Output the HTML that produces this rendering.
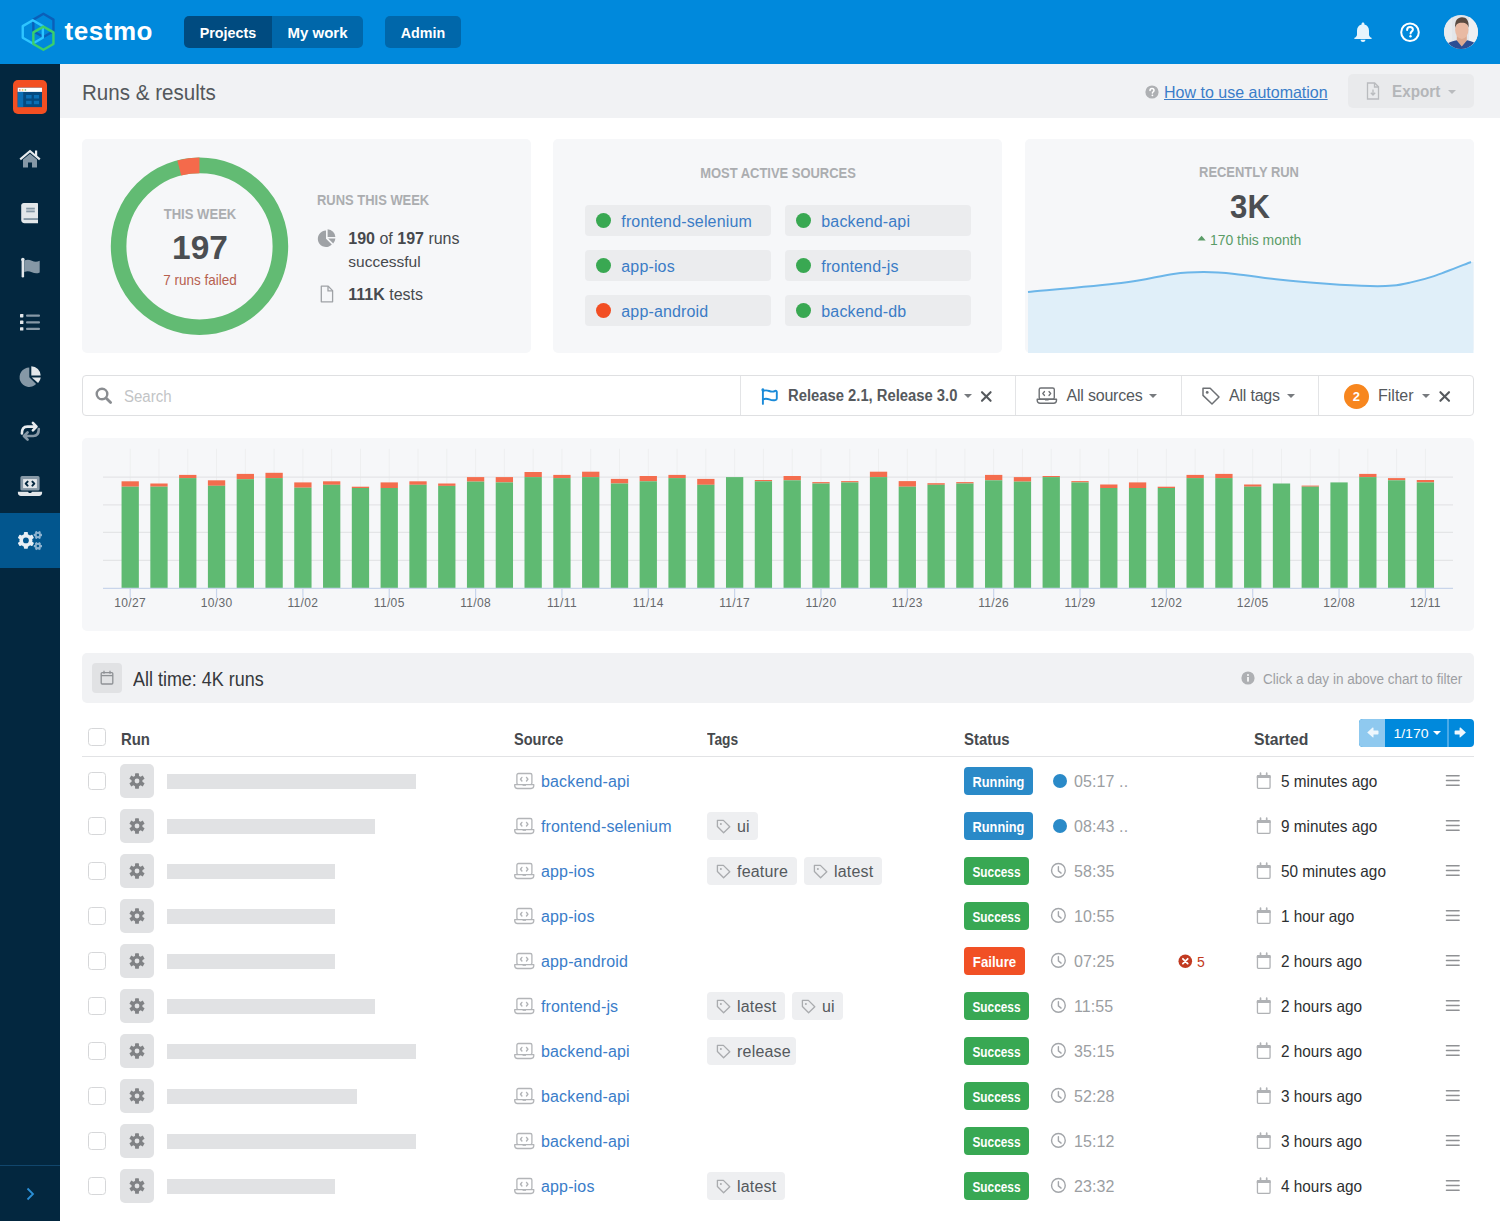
<!DOCTYPE html>
<html><head><meta charset="utf-8"><title>Runs &amp; results</title>
<style>
html,body{margin:0;padding:0;width:1500px;height:1221px;overflow:hidden;background:#fff;font-family:"Liberation Sans",sans-serif;}
.t{position:absolute;white-space:nowrap;}
.r{position:absolute;}
svg.r{overflow:visible}
</style></head><body>

<div class="r" style="left:0px;top:0px;width:1500px;height:64px;background:#0089dc;border-radius:0px;"></div>
<svg class="r" style="left:0px;top:0px;" width="64" height="64" viewBox="0 0 64 64"><polygon points="43.40,13.80 53.45,19.60 53.45,31.20 43.40,37.00 33.35,31.20 33.35,19.60" fill="none" stroke="#0b5fb8" stroke-width="2.4" stroke-linejoin="round"/><polygon points="32.80,20.30 42.85,26.10 42.85,37.70 32.80,43.50 22.75,37.70 22.75,26.10" fill="none" stroke="#2ec5ff" stroke-width="2.4" stroke-linejoin="round"/><polygon points="43.40,26.60 53.45,32.40 53.45,44.00 43.40,49.80 33.35,44.00 33.35,32.40" fill="none" stroke="#3bcf6a" stroke-width="2.4" stroke-linejoin="round"/></svg>
<div class="t" style="left:64.50px;top:14.94px;font-size:26px;line-height:33.8px;color:#fff;font-weight:bold;letter-spacing:0.55px">testmo</div>
<div class="r" style="left:184px;top:16px;width:88px;height:32px;background:#004b80;border-radius:0px;border-radius:5px 0 0 5px"></div>
<div class="r" style="left:272px;top:16px;width:91px;height:32px;background:#0067aa;border-radius:0px;border-radius:0 5px 5px 0"></div>
<div class="r" style="left:385px;top:16px;width:76px;height:32px;background:#0067aa;border-radius:5px;"></div>
<div class="t" style="left:183.50px;top:23.30px;width:88px;text-align:center;font-size:15.5px;line-height:20.15px;color:#fff;font-weight:bold;transform:scaleX(0.9236);transform-origin:50% 0;">Projects</div>
<div class="t" style="left:271.80px;top:23.30px;width:91px;text-align:center;font-size:15.5px;line-height:20.15px;color:#fff;font-weight:bold;transform:scaleX(0.9675);transform-origin:50% 0;">My work</div>
<div class="t" style="left:385.00px;top:23.30px;width:76px;text-align:center;font-size:15.5px;line-height:20.15px;color:#fff;font-weight:bold;transform:scaleX(0.9215);transform-origin:50% 0;">Admin</div>
<svg class="r" style="left:1352px;top:21px;" width="22" height="22" viewBox="0 0 22 22"><path d="M11 1.6c.9 0 1.4.6 1.4 1.3v.6c3 .7 4.6 3.2 4.6 6.3v3.6c0 1.3.8 2.5 2.4 3.4.6.4.4 1.2-.3 1.2H2.9c-.7 0-.9-.8-.3-1.2 1.6-.9 2.4-2.1 2.4-3.4V9.8c0-3.1 1.6-5.6 4.6-6.3v-.6c0-.7.5-1.3 1.4-1.3z" fill="#e6f4fc"/><path d="M8.6 18.8h4.8c0 1.4-1.1 2.2-2.4 2.2s-2.4-.8-2.4-2.2z" fill="#e6f4fc"/></svg>
<svg class="r" style="left:1398px;top:20px;" width="24" height="24" viewBox="0 0 24 24"><circle cx="12" cy="12.3" r="8.8" fill="none" stroke="#fff" stroke-width="2"/><path d="M9.1 9.9c0-1.7 1.3-2.8 2.9-2.8 1.7 0 2.9 1.1 2.9 2.5 0 1.9-2.3 2.1-2.3 3.9" fill="none" stroke="#fff" stroke-width="2" stroke-linecap="round"/><circle cx="12.5" cy="16.2" r="1.2" fill="#fff"/></svg>
<svg class="r" style="left:1444px;top:15px;" width="34" height="34" viewBox="0 0 34 34"><defs><clipPath id="av"><circle cx="17" cy="17" r="17"/></clipPath></defs><g clip-path="url(#av)"><rect width="34" height="34" fill="#e3e6ea"/><rect x="25" y="0" width="9" height="34" fill="#eff0f2"/><rect x="0" y="0" width="8" height="34" fill="#e9ebee"/><path d="M12.8 20h10v12h-10z" fill="#dcaa91"/><ellipse cx="17.8" cy="14.8" rx="6.7" ry="9.2" fill="#e9baa3"/><path d="M11.2 13C10.6 5.5 13.6 2.2 18 2.2s7.2 3 6.6 10.6c-.8-3.4-2.4-4.9-6.6-5S11.9 9.6 11.2 13z" fill="#594a41"/><path d="M0 34V30.2C4.5 27.5 8.5 26 12.6 25.2L17.8 31.4 23.1 25.2C27.2 26 31 27.5 34 30.2V34z" fill="#2d4f94"/></g></svg>
<div class="r" style="left:0px;top:64px;width:60px;height:1157px;background:#03273f;border-radius:0px;"></div>
<div class="r" style="left:0px;top:513px;width:60px;height:55px;background:#02568e;border-radius:0px;"></div>
<div class="r" style="left:0px;top:1165px;width:60px;height:1px;background:#11466c;border-radius:0px;"></div>
<svg class="r" style="left:24px;top:1186px;" width="12" height="16" viewBox="0 0 12 16"><path d="M3.5 2.5l5.5 5.5-5.5 5.5" fill="none" stroke="#2b8fd6" stroke-width="1.8"/></svg>
<svg class="r" style="left:13px;top:80px;" width="34" height="34" viewBox="0 0 34 34"><rect x="0" y="0" width="34" height="34" rx="5" fill="#f34f22"/><rect x="4.7" y="7.7" width="24.3" height="19.4" fill="#044a80"/><rect x="4.7" y="7.7" width="24.3" height="4.2" fill="#fff"/><circle cx="6.8" cy="9.9" r=".85" fill="#ee8a78"/><circle cx="9.6" cy="9.9" r=".85" fill="#f3c45a"/><circle cx="12.4" cy="9.9" r=".85" fill="#84cf86"/><rect x="4.7" y="11.9" width="5.5" height="15.2" fill="#0a6fb5"/><rect x="13.1" y="15" width="5.5" height="3.5" fill="#0a70b6"/><rect x="20.9" y="15" width="5.1" height="3.5" fill="#0a70b6"/><rect x="13.1" y="20.8" width="5.5" height="3.4" fill="#0a70b6"/><rect x="20.9" y="20.8" width="5.1" height="3.4" fill="#0a70b6"/></svg>
<svg class="r" style="left:18px;top:148px;" width="24" height="21" viewBox="0 0 24 21"><path d="M12 1.8L1.5 10.6l1.4 1.6L12 4.6l9.1 7.6 1.4-1.6-3.3-2.8V2.5h-2.2v3.5z" fill="#e8ecef"/><path d="M5 11.5L12 5.8l7 5.7v7.9h-5v-5h-4v5H5z" fill="#8698a6"/></svg>
<svg class="r" style="left:20px;top:202px;" width="20" height="22" viewBox="0 0 20 22"><path d="M3.8 1h13.2c.6 0 1 .4 1 1v19.3H4.6C2.6 21.3 1.2 19.9 1.2 18V3.6C1.2 2.2 2.3 1 3.8 1z" fill="#e3e7ea"/><rect x="3.6" y="16.1" width="14.4" height="1.9" fill="#8698a6"/><rect x="6.2" y="5.7" width="8.6" height="1.8" fill="#8698a6"/><rect x="6.2" y="8.5" width="8.6" height="1.8" fill="#8698a6"/></svg>
<svg class="r" style="left:19px;top:257px;" width="22" height="21" viewBox="0 0 22 21"><rect x="2.6" y="2" width="2.5" height="18.4" rx="1.2" fill="#e3e7ea"/><circle cx="3.85" cy="2.6" r="1.75" fill="#e3e7ea"/><path d="M5.2 3.6c3-1.6 5.3-.9 7.7.1s4.4 1.5 7.8.1v11.6c-3 1.4-5.3.8-7.8-.2s-4.7-1.7-7.7-.1z" fill="#8698a6"/></svg>
<svg class="r" style="left:19px;top:313px;" width="22" height="19" viewBox="0 0 22 19"><rect x="1" y="1" width="3.4" height="3.4" rx=".6" fill="#e3e7ea"/><rect x="1" y="7.6" width="3.4" height="3.4" rx=".6" fill="#e3e7ea"/><rect x="1" y="14.2" width="3.4" height="3.4" rx=".6" fill="#e3e7ea"/><rect x="7" y="1.6" width="14" height="2.2" rx="1" fill="#8698a6"/><rect x="7" y="8.2" width="14" height="2.2" rx="1" fill="#8698a6"/><rect x="7" y="14.8" width="14" height="2.2" rx="1" fill="#8698a6"/></svg>
<svg class="r" style="left:19px;top:365px;" width="23" height="23" viewBox="0 0 23 23"><path d="M10.3 2.5v9.7l6.8 6.9A9.7 9.7 0 1 1 10.3 2.5z" fill="#8698a6"/><path d="M12.3 1.2a9.7 9.7 0 0 1 9.4 9.4h-9.4z" fill="#e3e7ea"/><path d="M12.8 12.6h9a9.6 9.6 0 0 1-2.7 5.4z" fill="#e3e7ea"/></svg>
<svg class="r" style="left:19px;top:419px;" width="23" height="23" viewBox="0 0 23 23"><path d="M2.9 14.4C2.9 10 4.4 7.6 8.4 7.6H17M13.9 3.9L17.5 7.6 13.9 11.3" fill="none" stroke="#e8ecef" stroke-width="2.6" stroke-linecap="round" stroke-linejoin="round"/><path d="M19.8 10C19.8 14.5 18.3 17 14.3 17H5.5M8.6 13.3L4.9 17 8.6 20.7" fill="none" stroke="#8698a6" stroke-width="2.6" stroke-linecap="round" stroke-linejoin="round"/></svg>
<svg class="r" style="left:17px;top:475px;" width="26" height="22" viewBox="0 0 26 22"><rect x="3.4" y="1.1" width="19.2" height="14.4" rx="1.6" fill="#8698a6"/><rect x="6.1" y="4.1" width="13.8" height="9" fill="#e3e7ea"/><path d="M10.6 6.6L8.7 8.6l1.9 2M15.4 6.6l1.9 2-1.9 2" fill="none" stroke="#03273f" stroke-width="2" stroke-linecap="round" stroke-linejoin="round"/><path d="M.9 16.7H11.1c.2.9.8 1.3 1.9 1.3s1.7-.4 1.9-1.3H25.1v1.2c0 1.6-1.3 3-3 3H3.9c-1.7 0-3-1.4-3-3z" fill="#e3e7ea"/></svg>
<svg class="r" style="left:17px;top:530px;" width="26" height="22" viewBox="0 0 26 22"><g transform="translate(8.9,10.4)"><rect x="-2" y="-8.3" width="4" height="4.5" rx=".7" fill="#e8eef4" transform="rotate(0)"/><rect x="-2" y="-8.3" width="4" height="4.5" rx=".7" fill="#e8eef4" transform="rotate(60)"/><rect x="-2" y="-8.3" width="4" height="4.5" rx=".7" fill="#e8eef4" transform="rotate(120)"/><rect x="-2" y="-8.3" width="4" height="4.5" rx=".7" fill="#e8eef4" transform="rotate(180)"/><rect x="-2" y="-8.3" width="4" height="4.5" rx=".7" fill="#e8eef4" transform="rotate(240)"/><rect x="-2" y="-8.3" width="4" height="4.5" rx=".7" fill="#e8eef4" transform="rotate(300)"/><circle r="6.5" fill="#e8eef4"/><circle r="2.9" fill="#02568e"/></g><g transform="translate(20.9,5)"><rect x="-1.15" y="-4.1" width="2.3" height="2.4" rx=".3" fill="#8eb3d0" transform="rotate(30)"/><rect x="-1.15" y="-4.1" width="2.3" height="2.4" rx=".3" fill="#8eb3d0" transform="rotate(90)"/><rect x="-1.15" y="-4.1" width="2.3" height="2.4" rx=".3" fill="#8eb3d0" transform="rotate(150)"/><rect x="-1.15" y="-4.1" width="2.3" height="2.4" rx=".3" fill="#8eb3d0" transform="rotate(210)"/><rect x="-1.15" y="-4.1" width="2.3" height="2.4" rx=".3" fill="#8eb3d0" transform="rotate(270)"/><rect x="-1.15" y="-4.1" width="2.3" height="2.4" rx=".3" fill="#8eb3d0" transform="rotate(330)"/><circle r="3.1" fill="#8eb3d0"/><circle r="1.25" fill="#02568e"/></g><g transform="translate(20.9,16.1)"><rect x="-1.15" y="-4.1" width="2.3" height="2.4" rx=".3" fill="#8eb3d0" transform="rotate(30)"/><rect x="-1.15" y="-4.1" width="2.3" height="2.4" rx=".3" fill="#8eb3d0" transform="rotate(90)"/><rect x="-1.15" y="-4.1" width="2.3" height="2.4" rx=".3" fill="#8eb3d0" transform="rotate(150)"/><rect x="-1.15" y="-4.1" width="2.3" height="2.4" rx=".3" fill="#8eb3d0" transform="rotate(210)"/><rect x="-1.15" y="-4.1" width="2.3" height="2.4" rx=".3" fill="#8eb3d0" transform="rotate(270)"/><rect x="-1.15" y="-4.1" width="2.3" height="2.4" rx=".3" fill="#8eb3d0" transform="rotate(330)"/><circle r="3.1" fill="#8eb3d0"/><circle r="1.25" fill="#02568e"/></g></svg>
<div class="r" style="left:60px;top:64px;width:1440px;height:54px;background:#f1f2f4;border-radius:0px;"></div>
<div class="t" style="left:82.00px;top:78.13px;font-size:22.5px;line-height:29.25px;color:#54585c;font-weight:normal;transform:scaleX(0.9141);transform-origin:0 0;">Runs &amp; results</div>
<svg class="r" style="left:1145px;top:85px;" width="14" height="14" viewBox="0 0 14 14"><circle cx="7" cy="7" r="6.6" fill="#aeb0b3"/><path d="M5 5.6c0-1.2.9-2 2-2s2 .8 2 1.8c0 1.3-1.6 1.4-1.6 2.7" fill="none" stroke="#fff" stroke-width="1.5" stroke-linecap="round"/><circle cx="7.4" cy="10.3" r=".9" fill="#fff"/></svg>
<div class="t" style="left:1164.00px;top:81.61px;font-size:16.5px;line-height:21.45px;color:#3a7dc9;font-weight:normal;text-decoration:underline;text-underline-offset:1px;transform:scaleX(0.9697);transform-origin:0 0;">How to use automation</div>
<div class="r" style="left:1348px;top:74px;width:126px;height:34px;background:#e9eaec;border-radius:5px;"></div>
<svg class="r" style="left:1366px;top:82px;" width="14" height="18" viewBox="0 0 14 18"><path d="M1.5 1h7.2l3.8 3.8v12.2h-11z" fill="none" stroke="#b9bbbe" stroke-width="1.3"/><path d="M8.5 1v4h4" fill="none" stroke="#b9bbbe" stroke-width="1.3"/><path d="M7 7.5v5.5M4.8 10.8L7 13l2.2-2.2" fill="none" stroke="#b9bbbe" stroke-width="1.3"/></svg>
<div class="t" style="left:1392.00px;top:81.91px;font-size:16px;line-height:20.8px;color:#b4b6b9;font-weight:bold;transform:scaleX(0.9534);transform-origin:0 0;">Export</div>
<svg class="r" style="left:1447px;top:89px;" width="10" height="6" viewBox="0 0 10 6"><path d="M1 1h8L5 5z" fill="#b9bbbe"/></svg>
<div class="r" style="left:82px;top:139px;width:449px;height:214px;background:#f6f7f9;border-radius:5px;"></div>
<div class="r" style="left:553px;top:139px;width:449px;height:214px;background:#f6f7f9;border-radius:5px;"></div>
<div class="r" style="left:1025px;top:139px;width:449px;height:214px;background:#f6f7f9;border-radius:5px;"></div>
<svg class="r" style="left:110px;top:157px;" width="180" height="180" viewBox="0 0 180 180"><circle cx="89.5" cy="89.30000000000001" r="80.9" fill="none" stroke="#62bb73" stroke-width="15.6"/><circle cx="89.5" cy="89.30000000000001" r="80.9" fill="none" stroke="#f46a4b" stroke-width="15.6" stroke-dasharray="20.43 508.31" transform="rotate(-104.472 89.5 89.30000000000001)"/></svg>
<div class="t" style="left:119.50px;top:204.80px;width:160px;text-align:center;font-size:14.5px;line-height:18.85px;color:#abadb0;font-weight:bold;transform:scaleX(0.9015);transform-origin:50% 0;">THIS WEEK</div>
<div class="t" style="left:119.50px;top:225.77px;width:160px;text-align:center;font-size:33.5px;line-height:43.55px;color:#4b4e52;font-weight:bold;transform:scaleX(0.9988);transform-origin:50% 0;">197</div>
<div class="t" style="left:119.50px;top:270.70px;width:160px;text-align:center;font-size:14.5px;line-height:18.85px;color:#b6604f;font-weight:normal;transform:scaleX(0.9287);transform-origin:50% 0;">7 runs failed</div>
<div class="t" style="left:317.30px;top:191.00px;font-size:14.5px;line-height:18.85px;color:#abadb0;font-weight:bold;transform:scaleX(0.8930);transform-origin:0 0;">RUNS THIS WEEK</div>
<svg class="r" style="left:318px;top:228px;" width="19" height="19" viewBox="0 0 19 19"><path d="M8 2.6v8.2l5.8 5.8A8.2 8.2 0 1 1 8 2.6z" fill="#9fa2a6"/><path d="M9.6 1.3a8 8 0 0 1 7.8 7.8H9.6z" fill="#9fa2a6"/><path d="M10.2 10.6h7.2a8 8 0 0 1-2.2 4.9z" fill="#9fa2a6"/></svg>
<div class="t" style="left:348.30px;top:228.51px;font-size:16px;line-height:20.8px;color:#46494d;font-weight:normal;"><b>190</b> of <b>197</b> runs</div>
<div class="t" style="left:348.30px;top:251.70px;font-size:15.5px;line-height:20.15px;color:#46494d;font-weight:normal;">successful</div>
<svg class="r" style="left:319px;top:285px;" width="16" height="18" viewBox="0 0 16 18"><path d="M2.3 1.2h6.9l4.4 4.4v11.2H2.3z" fill="none" stroke="#9fa2a6" stroke-width="1.3" stroke-linejoin="round"/><path d="M9 1.2v4.6h4.6" fill="none" stroke="#9fa2a6" stroke-width="1.3"/></svg>
<div class="t" style="left:348.30px;top:284.51px;font-size:16px;line-height:20.8px;color:#46494d;font-weight:normal;"><b>111K</b> tests</div>
<div class="t" style="left:627.75px;top:163.70px;width:300px;text-align:center;font-size:14.5px;line-height:18.85px;color:#abadb0;font-weight:bold;transform:scaleX(0.8935);transform-origin:50% 0;">MOST ACTIVE SOURCES</div>
<div class="r" style="left:585px;top:205px;width:186px;height:31px;background:#ebecee;border-radius:4px;"></div>
<div class="r" style="left:595.5px;top:213px;width:15px;height:15px;background:#39a852;border-radius:8px;"></div>
<div class="t" style="left:621.30px;top:211.51px;font-size:16px;line-height:20.8px;color:#3b7cc6;font-weight:normal;letter-spacing:0.15px">frontend-selenium</div>
<div class="r" style="left:785px;top:205px;width:186px;height:31px;background:#ebecee;border-radius:4px;"></div>
<div class="r" style="left:795.5px;top:213px;width:15px;height:15px;background:#39a852;border-radius:8px;"></div>
<div class="t" style="left:821.30px;top:211.51px;font-size:16px;line-height:20.8px;color:#3b7cc6;font-weight:normal;letter-spacing:0.15px">backend-api</div>
<div class="r" style="left:585px;top:250px;width:186px;height:31px;background:#ebecee;border-radius:4px;"></div>
<div class="r" style="left:595.5px;top:258px;width:15px;height:15px;background:#39a852;border-radius:8px;"></div>
<div class="t" style="left:621.30px;top:256.51px;font-size:16px;line-height:20.8px;color:#3b7cc6;font-weight:normal;letter-spacing:0.15px">app-ios</div>
<div class="r" style="left:785px;top:250px;width:186px;height:31px;background:#ebecee;border-radius:4px;"></div>
<div class="r" style="left:795.5px;top:258px;width:15px;height:15px;background:#39a852;border-radius:8px;"></div>
<div class="t" style="left:821.30px;top:256.51px;font-size:16px;line-height:20.8px;color:#3b7cc6;font-weight:normal;letter-spacing:0.15px">frontend-js</div>
<div class="r" style="left:585px;top:295px;width:186px;height:31px;background:#ebecee;border-radius:4px;"></div>
<div class="r" style="left:595.5px;top:303px;width:15px;height:15px;background:#f24e23;border-radius:8px;"></div>
<div class="t" style="left:621.30px;top:301.51px;font-size:16px;line-height:20.8px;color:#3b7cc6;font-weight:normal;letter-spacing:0.15px">app-android</div>
<div class="r" style="left:785px;top:295px;width:186px;height:31px;background:#ebecee;border-radius:4px;"></div>
<div class="r" style="left:795.5px;top:303px;width:15px;height:15px;background:#39a852;border-radius:8px;"></div>
<div class="t" style="left:821.30px;top:301.51px;font-size:16px;line-height:20.8px;color:#3b7cc6;font-weight:normal;letter-spacing:0.15px">backend-db</div>
<div class="t" style="left:1149.40px;top:163.20px;width:200px;text-align:center;font-size:14.5px;line-height:18.85px;color:#abadb0;font-weight:bold;transform:scaleX(0.8919);transform-origin:50% 0;">RECENTLY RUN</div>
<div class="t" style="left:1149.70px;top:183.97px;width:200px;text-align:center;font-size:34px;line-height:44.2px;color:#4b4e52;font-weight:bold;transform:scaleX(0.9155);transform-origin:50% 0;">3K</div>
<svg class="r" style="left:1197px;top:234px;" width="10" height="8" viewBox="0 0 10 8"><path d="M0.5 6.5L4.6 1.8 8.7 6.5z" fill="#5a9c67"/></svg>
<div class="t" style="left:1210.00px;top:229.70px;font-size:15px;line-height:19.5px;color:#5a9c67;font-weight:normal;transform:scaleX(0.9273);transform-origin:0 0;">170 this month</div>
<svg class="r" style="left:1025px;top:250px;" width="449" height="103" viewBox="0 0 449 103"><path d="M 3.00 42.00 C 18.53 40.52, 71.97 36.12, 96.20 33.10 C 120.43 30.08, 134.60 25.73, 148.40 23.90 C 162.20 22.07, 168.78 22.10, 179.00 22.10 C 189.22 22.10, 196.92 22.62, 209.70 23.90 C 222.48 25.18, 240.37 28.17, 255.70 29.80 C 271.03 31.43, 286.82 32.65, 301.70 33.70 C 316.58 34.75, 333.95 35.78, 345.00 36.10 C 356.05 36.42, 361.33 36.18, 368.00 35.60 C 374.67 35.02, 378.17 34.18, 385.00 32.60 C 391.83 31.02, 398.83 29.53, 409.00 26.10 C 419.17 22.67, 439.83 14.35, 446.00 12.00 L 448.5 12 L 448.5 103 L 3 103 Z" fill="#e0eff9"/><path d="M 3.00 42.00 C 18.53 40.52, 71.97 36.12, 96.20 33.10 C 120.43 30.08, 134.60 25.73, 148.40 23.90 C 162.20 22.07, 168.78 22.10, 179.00 22.10 C 189.22 22.10, 196.92 22.62, 209.70 23.90 C 222.48 25.18, 240.37 28.17, 255.70 29.80 C 271.03 31.43, 286.82 32.65, 301.70 33.70 C 316.58 34.75, 333.95 35.78, 345.00 36.10 C 356.05 36.42, 361.33 36.18, 368.00 35.60 C 374.67 35.02, 378.17 34.18, 385.00 32.60 C 391.83 31.02, 398.83 29.53, 409.00 26.10 C 419.17 22.67, 439.83 14.35, 446.00 12.00" fill="none" stroke="#6cb6e9" stroke-width="2"/></svg>
<div class="r" style="left:82px;top:375px;width:1390px;height:39px;background:#fff;border-radius:4px;border:1px solid #dfe0e2"></div>
<svg class="r" style="left:94px;top:386px;" width="20" height="20" viewBox="0 0 20 20"><circle cx="8" cy="8" r="5.3" fill="none" stroke="#8a8d91" stroke-width="2.4"/><path d="M12 12l4.6 4.6" stroke="#8a8d91" stroke-width="2.8" stroke-linecap="round"/></svg>
<div class="t" style="left:124.30px;top:386.71px;font-size:16px;line-height:20.8px;color:#c2c4c6;font-weight:normal;transform:scaleX(0.9378);transform-origin:0 0;">Search</div>
<div class="r" style="left:740px;top:376px;width:1px;height:39px;background:#e3e4e6;border-radius:0px;"></div>
<div class="r" style="left:1015px;top:376px;width:1px;height:39px;background:#e3e4e6;border-radius:0px;"></div>
<div class="r" style="left:1181px;top:376px;width:1px;height:39px;background:#e3e4e6;border-radius:0px;"></div>
<div class="r" style="left:1318px;top:376px;width:1px;height:39px;background:#e3e4e6;border-radius:0px;"></div>
<svg class="r" style="left:760px;top:387px;" width="20" height="20" viewBox="0 0 20 20"><path d="M2.9 2.8v14.1" stroke="#1a8ad8" stroke-width="1.9" stroke-linecap="round"/><circle cx="2.9" cy="2.8" r="1.5" fill="#1a8ad8"/><path d="M2.9 4C5.2 3 7.1 3.2 9.2 4s4 1 6-.1c.9-.4 1.6.2 1.6 1.2v6.3c0 .9-.6 1.5-1.5 1.7-2.1.5-4 .1-6-.7s-4-1-6.4-.1" fill="none" stroke="#1a8ad8" stroke-width="1.9" stroke-linejoin="round" stroke-linecap="round"/></svg>
<div class="t" style="left:788.00px;top:386.31px;font-size:16px;line-height:20.8px;color:#55595d;font-weight:bold;transform:scaleX(0.9246);transform-origin:0 0;">Release 2.1, Release 3.0</div>
<svg class="r" style="left:963px;top:393px;" width="10" height="6" viewBox="0 0 10 6"><path d="M1 1h8L5 5z" fill="#777a7e"/></svg>
<svg class="r" style="left:980px;top:390px;" width="13" height="13" viewBox="0 0 13 13"><path d="M2 2.2l8.6 8.6M10.6 2.2L2 10.8" stroke="#55595d" stroke-width="2.1" stroke-linecap="round"/></svg>
<svg class="r" style="left:1036px;top:386px;" width="22" height="19" viewBox="0 0 22 19"><rect x="3.2" y="2" width="15.1" height="11.2" rx="1.6" fill="none" stroke="#6d7074" stroke-width="1.4"/><path d="M1.2 13.2H20.5V14.3C20.5 16 19.3 17.3 17.6 17.3H4.1C2.4 17.3 1.2 16 1.2 14.3Z" fill="#fff" stroke="#6d7074" stroke-width="1.4" stroke-linejoin="round"/><path d="M9 13.9h3.6" stroke="#6d7074" stroke-width="1.2"/><path d="M8.4 5.6L6.9 7.5l1.5 1.9M13.1 5.6l1.5 1.9-1.5 1.9" fill="none" stroke="#6d7074" stroke-width="1.5" stroke-linecap="round" stroke-linejoin="round"/></svg>
<div class="t" style="left:1066.50px;top:385.81px;font-size:16px;line-height:20.8px;color:#55595d;font-weight:normal;letter-spacing:-0.2px">All sources</div>
<svg class="r" style="left:1148px;top:393px;" width="10" height="6" viewBox="0 0 10 6"><path d="M1 1h8L5 5z" fill="#777a7e"/></svg>
<svg class="r" style="left:1201px;top:386px;" width="20" height="20" viewBox="0 0 20 20"><path d="M2 2.2h7.2l8.8 8.8-7 7L2 9.4z" fill="none" stroke="#6d7074" stroke-width="1.5" stroke-linejoin="round"/><circle cx="6.2" cy="6.4" r="1.4" fill="#6d7074"/></svg>
<div class="t" style="left:1229.00px;top:385.81px;font-size:16px;line-height:20.8px;color:#55595d;font-weight:normal;letter-spacing:-0.2px">All tags</div>
<svg class="r" style="left:1286px;top:393px;" width="10" height="6" viewBox="0 0 10 6"><path d="M1 1h8L5 5z" fill="#777a7e"/></svg>
<div class="r" style="left:1343.5px;top:383.5px;width:25.5px;height:25.5px;background:#f7861e;border-radius:13px;"></div>
<div class="t" style="left:1341.25px;top:388.70px;width:30px;text-align:center;font-size:13px;line-height:16.9px;color:#fff;font-weight:bold;">2</div>
<div class="t" style="left:1378.00px;top:386.31px;font-size:16px;line-height:20.8px;color:#55595d;font-weight:normal;">Filter</div>
<svg class="r" style="left:1421px;top:393px;" width="10" height="6" viewBox="0 0 10 6"><path d="M1 1h8L5 5z" fill="#777a7e"/></svg>
<svg class="r" style="left:1438px;top:390px;" width="13" height="13" viewBox="0 0 13 13"><path d="M2.4 2.2l8.6 8.6M11 2.2L2.4 10.8" stroke="#55595d" stroke-width="2.1" stroke-linecap="round"/></svg>
<div class="r" style="left:82px;top:438px;width:1392px;height:193px;background:#f6f7f9;border-radius:5px;"></div>
<svg class="r" style="left:82px;top:438px;" width="1392" height="193" viewBox="0 0 1392 193"><line x1="48.20" y1="10.800000000000011" x2="48.20" y2="150.39999999999998" stroke="#eeeff0" stroke-width="1"/><line x1="76.98" y1="10.800000000000011" x2="76.98" y2="150.39999999999998" stroke="#eeeff0" stroke-width="1"/><line x1="105.76" y1="10.800000000000011" x2="105.76" y2="150.39999999999998" stroke="#eeeff0" stroke-width="1"/><line x1="134.55" y1="10.800000000000011" x2="134.55" y2="150.39999999999998" stroke="#eeeff0" stroke-width="1"/><line x1="163.33" y1="10.800000000000011" x2="163.33" y2="150.39999999999998" stroke="#eeeff0" stroke-width="1"/><line x1="192.11" y1="10.800000000000011" x2="192.11" y2="150.39999999999998" stroke="#eeeff0" stroke-width="1"/><line x1="220.89" y1="10.800000000000011" x2="220.89" y2="150.39999999999998" stroke="#eeeff0" stroke-width="1"/><line x1="249.68" y1="10.800000000000011" x2="249.68" y2="150.39999999999998" stroke="#eeeff0" stroke-width="1"/><line x1="278.46" y1="10.800000000000011" x2="278.46" y2="150.39999999999998" stroke="#eeeff0" stroke-width="1"/><line x1="307.24" y1="10.800000000000011" x2="307.24" y2="150.39999999999998" stroke="#eeeff0" stroke-width="1"/><line x1="336.02" y1="10.800000000000011" x2="336.02" y2="150.39999999999998" stroke="#eeeff0" stroke-width="1"/><line x1="364.80" y1="10.800000000000011" x2="364.80" y2="150.39999999999998" stroke="#eeeff0" stroke-width="1"/><line x1="393.59" y1="10.800000000000011" x2="393.59" y2="150.39999999999998" stroke="#eeeff0" stroke-width="1"/><line x1="422.37" y1="10.800000000000011" x2="422.37" y2="150.39999999999998" stroke="#eeeff0" stroke-width="1"/><line x1="451.15" y1="10.800000000000011" x2="451.15" y2="150.39999999999998" stroke="#eeeff0" stroke-width="1"/><line x1="479.93" y1="10.800000000000011" x2="479.93" y2="150.39999999999998" stroke="#eeeff0" stroke-width="1"/><line x1="508.72" y1="10.800000000000011" x2="508.72" y2="150.39999999999998" stroke="#eeeff0" stroke-width="1"/><line x1="537.50" y1="10.800000000000011" x2="537.50" y2="150.39999999999998" stroke="#eeeff0" stroke-width="1"/><line x1="566.28" y1="10.800000000000011" x2="566.28" y2="150.39999999999998" stroke="#eeeff0" stroke-width="1"/><line x1="595.06" y1="10.800000000000011" x2="595.06" y2="150.39999999999998" stroke="#eeeff0" stroke-width="1"/><line x1="623.84" y1="10.800000000000011" x2="623.84" y2="150.39999999999998" stroke="#eeeff0" stroke-width="1"/><line x1="652.63" y1="10.800000000000011" x2="652.63" y2="150.39999999999998" stroke="#eeeff0" stroke-width="1"/><line x1="681.41" y1="10.800000000000011" x2="681.41" y2="150.39999999999998" stroke="#eeeff0" stroke-width="1"/><line x1="710.19" y1="10.800000000000011" x2="710.19" y2="150.39999999999998" stroke="#eeeff0" stroke-width="1"/><line x1="738.97" y1="10.800000000000011" x2="738.97" y2="150.39999999999998" stroke="#eeeff0" stroke-width="1"/><line x1="767.76" y1="10.800000000000011" x2="767.76" y2="150.39999999999998" stroke="#eeeff0" stroke-width="1"/><line x1="796.54" y1="10.800000000000011" x2="796.54" y2="150.39999999999998" stroke="#eeeff0" stroke-width="1"/><line x1="825.32" y1="10.800000000000011" x2="825.32" y2="150.39999999999998" stroke="#eeeff0" stroke-width="1"/><line x1="854.10" y1="10.800000000000011" x2="854.10" y2="150.39999999999998" stroke="#eeeff0" stroke-width="1"/><line x1="882.88" y1="10.800000000000011" x2="882.88" y2="150.39999999999998" stroke="#eeeff0" stroke-width="1"/><line x1="911.67" y1="10.800000000000011" x2="911.67" y2="150.39999999999998" stroke="#eeeff0" stroke-width="1"/><line x1="940.45" y1="10.800000000000011" x2="940.45" y2="150.39999999999998" stroke="#eeeff0" stroke-width="1"/><line x1="969.23" y1="10.800000000000011" x2="969.23" y2="150.39999999999998" stroke="#eeeff0" stroke-width="1"/><line x1="998.01" y1="10.800000000000011" x2="998.01" y2="150.39999999999998" stroke="#eeeff0" stroke-width="1"/><line x1="1026.80" y1="10.800000000000011" x2="1026.80" y2="150.39999999999998" stroke="#eeeff0" stroke-width="1"/><line x1="1055.58" y1="10.800000000000011" x2="1055.58" y2="150.39999999999998" stroke="#eeeff0" stroke-width="1"/><line x1="1084.36" y1="10.800000000000011" x2="1084.36" y2="150.39999999999998" stroke="#eeeff0" stroke-width="1"/><line x1="1113.14" y1="10.800000000000011" x2="1113.14" y2="150.39999999999998" stroke="#eeeff0" stroke-width="1"/><line x1="1141.92" y1="10.800000000000011" x2="1141.92" y2="150.39999999999998" stroke="#eeeff0" stroke-width="1"/><line x1="1170.71" y1="10.800000000000011" x2="1170.71" y2="150.39999999999998" stroke="#eeeff0" stroke-width="1"/><line x1="1199.49" y1="10.800000000000011" x2="1199.49" y2="150.39999999999998" stroke="#eeeff0" stroke-width="1"/><line x1="1228.27" y1="10.800000000000011" x2="1228.27" y2="150.39999999999998" stroke="#eeeff0" stroke-width="1"/><line x1="1257.05" y1="10.800000000000011" x2="1257.05" y2="150.39999999999998" stroke="#eeeff0" stroke-width="1"/><line x1="1285.84" y1="10.800000000000011" x2="1285.84" y2="150.39999999999998" stroke="#eeeff0" stroke-width="1"/><line x1="1314.62" y1="10.800000000000011" x2="1314.62" y2="150.39999999999998" stroke="#eeeff0" stroke-width="1"/><line x1="1343.40" y1="10.800000000000011" x2="1343.40" y2="150.39999999999998" stroke="#eeeff0" stroke-width="1"/><line x1="21" y1="39.20" x2="1371" y2="39.20" stroke="#e4e5e7" stroke-width="1.3"/><line x1="21" y1="66.80" x2="1371" y2="66.80" stroke="#e4e5e7" stroke-width="1.3"/><line x1="21" y1="94.40" x2="1371" y2="94.40" stroke="#e4e5e7" stroke-width="1.3"/><line x1="21" y1="122.40" x2="1371" y2="122.40" stroke="#e4e5e7" stroke-width="1.3"/><rect x="39.55" y="43.30" width="17.3" height="5.40" fill="#f46d4e"/><rect x="39.55" y="48.70" width="17.3" height="101.70" fill="#5fba72"/><rect x="68.33" y="45.50" width="17.3" height="3.20" fill="#f46d4e"/><rect x="68.33" y="48.70" width="17.3" height="101.70" fill="#5fba72"/><rect x="97.11" y="36.90" width="17.3" height="3.20" fill="#f46d4e"/><rect x="97.11" y="40.10" width="17.3" height="110.30" fill="#5fba72"/><rect x="125.90" y="42.30" width="17.3" height="5.50" fill="#f46d4e"/><rect x="125.90" y="47.80" width="17.3" height="102.60" fill="#5fba72"/><rect x="154.68" y="35.90" width="17.3" height="5.30" fill="#f46d4e"/><rect x="154.68" y="41.20" width="17.3" height="109.20" fill="#5fba72"/><rect x="183.46" y="34.80" width="17.3" height="5.30" fill="#f46d4e"/><rect x="183.46" y="40.10" width="17.3" height="110.30" fill="#5fba72"/><rect x="212.24" y="44.40" width="17.3" height="5.30" fill="#f46d4e"/><rect x="212.24" y="49.70" width="17.3" height="100.70" fill="#5fba72"/><rect x="241.03" y="43.30" width="17.3" height="3.50" fill="#f46d4e"/><rect x="241.03" y="46.80" width="17.3" height="103.60" fill="#5fba72"/><rect x="269.81" y="48.70" width="17.3" height="1.30" fill="#f46d4e"/><rect x="269.81" y="50.00" width="17.3" height="100.40" fill="#5fba72"/><rect x="298.59" y="44.40" width="17.3" height="5.60" fill="#f46d4e"/><rect x="298.59" y="50.00" width="17.3" height="100.40" fill="#5fba72"/><rect x="327.37" y="43.30" width="17.3" height="3.50" fill="#f46d4e"/><rect x="327.37" y="46.80" width="17.3" height="103.60" fill="#5fba72"/><rect x="356.15" y="45.50" width="17.3" height="2.40" fill="#f46d4e"/><rect x="356.15" y="47.90" width="17.3" height="102.50" fill="#5fba72"/><rect x="384.94" y="39.10" width="17.3" height="4.50" fill="#f46d4e"/><rect x="384.94" y="43.60" width="17.3" height="106.80" fill="#5fba72"/><rect x="413.72" y="39.10" width="17.3" height="5.30" fill="#f46d4e"/><rect x="413.72" y="44.40" width="17.3" height="106.00" fill="#5fba72"/><rect x="442.50" y="34.00" width="17.3" height="5.10" fill="#f46d4e"/><rect x="442.50" y="39.10" width="17.3" height="111.30" fill="#5fba72"/><rect x="471.28" y="36.90" width="17.3" height="3.20" fill="#f46d4e"/><rect x="471.28" y="40.10" width="17.3" height="110.30" fill="#5fba72"/><rect x="500.07" y="33.70" width="17.3" height="5.40" fill="#f46d4e"/><rect x="500.07" y="39.10" width="17.3" height="111.30" fill="#5fba72"/><rect x="528.85" y="40.90" width="17.3" height="4.60" fill="#f46d4e"/><rect x="528.85" y="45.50" width="17.3" height="104.90" fill="#5fba72"/><rect x="557.63" y="38.00" width="17.3" height="5.30" fill="#f46d4e"/><rect x="557.63" y="43.30" width="17.3" height="107.10" fill="#5fba72"/><rect x="586.41" y="36.90" width="17.3" height="3.20" fill="#f46d4e"/><rect x="586.41" y="40.10" width="17.3" height="110.30" fill="#5fba72"/><rect x="615.19" y="40.90" width="17.3" height="5.90" fill="#f46d4e"/><rect x="615.19" y="46.80" width="17.3" height="103.60" fill="#5fba72"/><rect x="643.98" y="39.10" width="17.3" height="111.30" fill="#5fba72"/><rect x="672.76" y="42.00" width="17.3" height="1.30" fill="#f46d4e"/><rect x="672.76" y="43.30" width="17.3" height="107.10" fill="#5fba72"/><rect x="701.54" y="38.00" width="17.3" height="4.30" fill="#f46d4e"/><rect x="701.54" y="42.30" width="17.3" height="108.10" fill="#5fba72"/><rect x="730.32" y="44.10" width="17.3" height="1.40" fill="#f46d4e"/><rect x="730.32" y="45.50" width="17.3" height="104.90" fill="#5fba72"/><rect x="759.11" y="43.10" width="17.3" height="1.30" fill="#f46d4e"/><rect x="759.11" y="44.40" width="17.3" height="106.00" fill="#5fba72"/><rect x="787.89" y="33.70" width="17.3" height="5.40" fill="#f46d4e"/><rect x="787.89" y="39.10" width="17.3" height="111.30" fill="#5fba72"/><rect x="816.67" y="43.10" width="17.3" height="5.60" fill="#f46d4e"/><rect x="816.67" y="48.70" width="17.3" height="101.70" fill="#5fba72"/><rect x="845.45" y="45.20" width="17.3" height="1.60" fill="#f46d4e"/><rect x="845.45" y="46.80" width="17.3" height="103.60" fill="#5fba72"/><rect x="874.23" y="44.10" width="17.3" height="1.40" fill="#f46d4e"/><rect x="874.23" y="45.50" width="17.3" height="104.90" fill="#5fba72"/><rect x="903.02" y="36.90" width="17.3" height="5.40" fill="#f46d4e"/><rect x="903.02" y="42.30" width="17.3" height="108.10" fill="#5fba72"/><rect x="931.80" y="39.10" width="17.3" height="4.50" fill="#f46d4e"/><rect x="931.80" y="43.60" width="17.3" height="106.80" fill="#5fba72"/><rect x="960.58" y="38.00" width="17.3" height="1.10" fill="#f46d4e"/><rect x="960.58" y="39.10" width="17.3" height="111.30" fill="#5fba72"/><rect x="989.36" y="43.10" width="17.3" height="1.30" fill="#f46d4e"/><rect x="989.36" y="44.40" width="17.3" height="106.00" fill="#5fba72"/><rect x="1018.15" y="46.50" width="17.3" height="3.50" fill="#f46d4e"/><rect x="1018.15" y="50.00" width="17.3" height="100.40" fill="#5fba72"/><rect x="1046.93" y="44.40" width="17.3" height="5.60" fill="#f46d4e"/><rect x="1046.93" y="50.00" width="17.3" height="100.40" fill="#5fba72"/><rect x="1075.71" y="48.70" width="17.3" height="1.30" fill="#f46d4e"/><rect x="1075.71" y="50.00" width="17.3" height="100.40" fill="#5fba72"/><rect x="1104.49" y="36.90" width="17.3" height="3.20" fill="#f46d4e"/><rect x="1104.49" y="40.10" width="17.3" height="110.30" fill="#5fba72"/><rect x="1133.27" y="35.90" width="17.3" height="4.20" fill="#f46d4e"/><rect x="1133.27" y="40.10" width="17.3" height="110.30" fill="#5fba72"/><rect x="1162.06" y="46.50" width="17.3" height="2.20" fill="#f46d4e"/><rect x="1162.06" y="48.70" width="17.3" height="101.70" fill="#5fba72"/><rect x="1190.84" y="45.50" width="17.3" height="104.90" fill="#5fba72"/><rect x="1219.62" y="47.60" width="17.3" height="1.10" fill="#f46d4e"/><rect x="1219.62" y="48.70" width="17.3" height="101.70" fill="#5fba72"/><rect x="1248.40" y="44.40" width="17.3" height="106.00" fill="#5fba72"/><rect x="1277.19" y="35.90" width="17.3" height="3.20" fill="#f46d4e"/><rect x="1277.19" y="39.10" width="17.3" height="111.30" fill="#5fba72"/><rect x="1305.97" y="40.10" width="17.3" height="2.20" fill="#f46d4e"/><rect x="1305.97" y="42.30" width="17.3" height="108.10" fill="#5fba72"/><rect x="1334.75" y="42.00" width="17.3" height="2.40" fill="#f46d4e"/><rect x="1334.75" y="44.40" width="17.3" height="106.00" fill="#5fba72"/><line x1="21" y1="150.39999999999998" x2="1371" y2="150.39999999999998" stroke="#c9d5eb" stroke-width="1.3"/><line x1="48.20" y1="150.39999999999998" x2="48.20" y2="160" stroke="#c9d5eb" stroke-width="1.2"/><line x1="134.55" y1="150.39999999999998" x2="134.55" y2="160" stroke="#c9d5eb" stroke-width="1.2"/><line x1="220.89" y1="150.39999999999998" x2="220.89" y2="160" stroke="#c9d5eb" stroke-width="1.2"/><line x1="307.24" y1="150.39999999999998" x2="307.24" y2="160" stroke="#c9d5eb" stroke-width="1.2"/><line x1="393.59" y1="150.39999999999998" x2="393.59" y2="160" stroke="#c9d5eb" stroke-width="1.2"/><line x1="479.93" y1="150.39999999999998" x2="479.93" y2="160" stroke="#c9d5eb" stroke-width="1.2"/><line x1="566.28" y1="150.39999999999998" x2="566.28" y2="160" stroke="#c9d5eb" stroke-width="1.2"/><line x1="652.63" y1="150.39999999999998" x2="652.63" y2="160" stroke="#c9d5eb" stroke-width="1.2"/><line x1="738.97" y1="150.39999999999998" x2="738.97" y2="160" stroke="#c9d5eb" stroke-width="1.2"/><line x1="825.32" y1="150.39999999999998" x2="825.32" y2="160" stroke="#c9d5eb" stroke-width="1.2"/><line x1="911.67" y1="150.39999999999998" x2="911.67" y2="160" stroke="#c9d5eb" stroke-width="1.2"/><line x1="998.01" y1="150.39999999999998" x2="998.01" y2="160" stroke="#c9d5eb" stroke-width="1.2"/><line x1="1084.36" y1="150.39999999999998" x2="1084.36" y2="160" stroke="#c9d5eb" stroke-width="1.2"/><line x1="1170.71" y1="150.39999999999998" x2="1170.71" y2="160" stroke="#c9d5eb" stroke-width="1.2"/><line x1="1257.05" y1="150.39999999999998" x2="1257.05" y2="160" stroke="#c9d5eb" stroke-width="1.2"/><line x1="1343.40" y1="150.39999999999998" x2="1343.40" y2="160" stroke="#c9d5eb" stroke-width="1.2"/></svg>
<div class="t" style="left:100.20px;top:595.79px;width:60px;text-align:center;font-size:12px;line-height:15.6px;color:#65686c;font-weight:normal;letter-spacing:0.35px">10/27</div>
<div class="t" style="left:186.55px;top:595.79px;width:60px;text-align:center;font-size:12px;line-height:15.6px;color:#65686c;font-weight:normal;letter-spacing:0.35px">10/30</div>
<div class="t" style="left:272.89px;top:595.79px;width:60px;text-align:center;font-size:12px;line-height:15.6px;color:#65686c;font-weight:normal;letter-spacing:0.35px">11/02</div>
<div class="t" style="left:359.24px;top:595.79px;width:60px;text-align:center;font-size:12px;line-height:15.6px;color:#65686c;font-weight:normal;letter-spacing:0.35px">11/05</div>
<div class="t" style="left:445.59px;top:595.79px;width:60px;text-align:center;font-size:12px;line-height:15.6px;color:#65686c;font-weight:normal;letter-spacing:0.35px">11/08</div>
<div class="t" style="left:531.93px;top:595.79px;width:60px;text-align:center;font-size:12px;line-height:15.6px;color:#65686c;font-weight:normal;letter-spacing:0.35px">11/11</div>
<div class="t" style="left:618.28px;top:595.79px;width:60px;text-align:center;font-size:12px;line-height:15.6px;color:#65686c;font-weight:normal;letter-spacing:0.35px">11/14</div>
<div class="t" style="left:704.63px;top:595.79px;width:60px;text-align:center;font-size:12px;line-height:15.6px;color:#65686c;font-weight:normal;letter-spacing:0.35px">11/17</div>
<div class="t" style="left:790.97px;top:595.79px;width:60px;text-align:center;font-size:12px;line-height:15.6px;color:#65686c;font-weight:normal;letter-spacing:0.35px">11/20</div>
<div class="t" style="left:877.32px;top:595.79px;width:60px;text-align:center;font-size:12px;line-height:15.6px;color:#65686c;font-weight:normal;letter-spacing:0.35px">11/23</div>
<div class="t" style="left:963.67px;top:595.79px;width:60px;text-align:center;font-size:12px;line-height:15.6px;color:#65686c;font-weight:normal;letter-spacing:0.35px">11/26</div>
<div class="t" style="left:1050.01px;top:595.79px;width:60px;text-align:center;font-size:12px;line-height:15.6px;color:#65686c;font-weight:normal;letter-spacing:0.35px">11/29</div>
<div class="t" style="left:1136.36px;top:595.79px;width:60px;text-align:center;font-size:12px;line-height:15.6px;color:#65686c;font-weight:normal;letter-spacing:0.35px">12/02</div>
<div class="t" style="left:1222.71px;top:595.79px;width:60px;text-align:center;font-size:12px;line-height:15.6px;color:#65686c;font-weight:normal;letter-spacing:0.35px">12/05</div>
<div class="t" style="left:1309.05px;top:595.79px;width:60px;text-align:center;font-size:12px;line-height:15.6px;color:#65686c;font-weight:normal;letter-spacing:0.35px">12/08</div>
<div class="t" style="left:1395.40px;top:595.79px;width:60px;text-align:center;font-size:12px;line-height:15.6px;color:#65686c;font-weight:normal;letter-spacing:0.35px">12/11</div>
<div class="r" style="left:82px;top:653px;width:1392px;height:50px;background:#f1f2f4;border-radius:5px;"></div>
<div class="r" style="left:92px;top:663px;width:30px;height:30px;background:#e1e2e4;border-radius:4px;"></div>
<svg class="r" style="left:99px;top:669px;" width="16" height="17" viewBox="0 0 16 17"><rect x="2.2" y="3.6" width="11.6" height="11.4" rx="1" fill="none" stroke="#8e9195" stroke-width="1.3"/><path d="M2.2 6.6h11.6" stroke="#8e9195" stroke-width="1.3"/><path d="M5 1.8v3M11 1.8v3" stroke="#8e9195" stroke-width="1.3"/></svg>
<div class="t" style="left:133.00px;top:667.12px;font-size:19.5px;line-height:25.35px;color:#35383b;font-weight:normal;transform:scaleX(0.9204);transform-origin:0 0;">All time: 4K runs</div>
<svg class="r" style="left:1241px;top:671px;" width="14" height="14" viewBox="0 0 14 14"><circle cx="7" cy="7" r="6.6" fill="#aeb0b3"/><rect x="6.2" y="6" width="1.6" height="4.6" fill="#fff"/><circle cx="7" cy="4" r=".95" fill="#fff"/></svg>
<div class="t" style="left:1263.00px;top:669.80px;font-size:14px;line-height:18.2px;color:#9d9fa3;font-weight:normal;transform:scaleX(0.9659);transform-origin:0 0;">Click a day in above chart to filter</div>
<div class="r" style="left:88px;top:728.2px;width:16px;height:16.3px;background:#fff;border-radius:3.5px;border:1px solid #d6d7d9"></div>
<div class="t" style="left:120.50px;top:728.81px;font-size:16.5px;line-height:21.45px;color:#46494d;font-weight:bold;transform:scaleX(0.9034);transform-origin:0 0;">Run</div>
<div class="t" style="left:514.40px;top:729.01px;font-size:16.5px;line-height:21.45px;color:#46494d;font-weight:bold;transform:scaleX(0.8823);transform-origin:0 0;">Source</div>
<div class="t" style="left:707.40px;top:729.01px;font-size:16.5px;line-height:21.45px;color:#46494d;font-weight:bold;transform:scaleX(0.8354);transform-origin:0 0;">Tags</div>
<div class="t" style="left:964.30px;top:729.01px;font-size:16.5px;line-height:21.45px;color:#46494d;font-weight:bold;transform:scaleX(0.9055);transform-origin:0 0;">Status</div>
<div class="t" style="left:1253.50px;top:729.01px;font-size:16.5px;line-height:21.45px;color:#46494d;font-weight:bold;transform:scaleX(0.9575);transform-origin:0 0;">Started</div>
<div class="r" style="left:82px;top:756px;width:1392px;height:1px;background:#e2e3e5;border-radius:0px;"></div>
<div class="r" style="left:1359px;top:719px;width:115px;height:27.5px;background:#0089dc;border-radius:4px;"></div>
<div class="r" style="left:1359px;top:719px;width:26px;height:27.5px;background:#8fc9ef;border-radius:0px;border-radius:4px 0 0 4px"></div>
<div class="r" style="left:1447.2px;top:719px;width:1.5px;height:27.5px;background:#4aaae8;border-radius:0px;"></div>
<svg class="r" style="left:1366px;top:726px;" width="14" height="14" viewBox="0 0 14 14"><path d="M1.2 6.4L6.6 1.6c.4-.3.9 0 .9.4v2.5h4.3c.4 0 .7.3.7.7v2.5c0 .4-.3.7-.7.7H7.5v2.5c0 .5-.5.7-.9.4z" fill="#eef7fd"/></svg>
<div class="t" style="left:1380.70px;top:724.50px;width:60px;text-align:center;font-size:13.5px;line-height:17.55px;color:#fff;font-weight:normal;transform:scaleX(1.0411);transform-origin:50% 0;">1/170</div>
<svg class="r" style="left:1432px;top:730px;" width="10" height="6" viewBox="0 0 10 6"><path d="M1 1h8L5 5z" fill="#fff"/></svg>
<svg class="r" style="left:1453px;top:726px;" width="14" height="14" viewBox="0 0 14 14"><path d="M12.9 6.4L7.5 1.6c-.4-.3-.9 0-.9.4v2.5H2.3c-.4 0-.7.3-.7.7v2.5c0 .4.3.7.7.7h4.3v2.5c0 .5.5.7.9.4z" fill="#eef7fd"/></svg>
<div class="r" style="left:88px;top:772px;width:16px;height:16.3px;background:#fff;border-radius:3.5px;border:1px solid #d6d7d9"></div>
<div class="r" style="left:120px;top:764px;width:34px;height:34px;background:#e1e2e4;border-radius:5px;"></div>
<svg class="r" style="left:129px;top:773px;" width="16" height="16" viewBox="0 0 16 16"><g transform="translate(8,8)"><rect x="-1.95" y="-7.7" width="3.9" height="3.8" rx=".4" fill="#808285" transform="rotate(0)"/><rect x="-1.95" y="-7.7" width="3.9" height="3.8" rx=".4" fill="#808285" transform="rotate(60)"/><rect x="-1.95" y="-7.7" width="3.9" height="3.8" rx=".4" fill="#808285" transform="rotate(120)"/><rect x="-1.95" y="-7.7" width="3.9" height="3.8" rx=".4" fill="#808285" transform="rotate(180)"/><rect x="-1.95" y="-7.7" width="3.9" height="3.8" rx=".4" fill="#808285" transform="rotate(240)"/><rect x="-1.95" y="-7.7" width="3.9" height="3.8" rx=".4" fill="#808285" transform="rotate(300)"/><circle r="5.5" fill="#808285"/><circle r="2.4" fill="#e1e2e4"/></g></svg>
<div class="r" style="left:167px;top:773.5px;width:249px;height:15px;background:#e1e2e4;border-radius:0px;"></div>
<svg class="r" style="left:514px;top:773px;" width="21" height="17" viewBox="0 0 21 17"><rect x="2.9" y="0.5" width="15" height="11.2" rx="1.6" fill="none" stroke="#b3b5b8" stroke-width="1.3"/><path d="M0.7 11.7H19.8V12.6C19.8 14.3 18.7 15.5 17.1 15.5H3.4C1.8 15.5 0.7 14.3 0.7 12.6Z" fill="#fff" stroke="#b3b5b8" stroke-width="1.3" stroke-linejoin="round"/><path d="M8.6 12.3h3.4" stroke="#b3b5b8" stroke-width="1.1"/><path d="M7.9 4.4L6.5 6.2l1.4 1.8M12.5 4.4l1.4 1.8-1.4 1.8" fill="none" stroke="#b3b5b8" stroke-width="1.4" stroke-linecap="round" stroke-linejoin="round"/></svg>
<div class="t" style="left:541.00px;top:771.51px;font-size:16px;line-height:20.8px;color:#3a7dc9;font-weight:normal;letter-spacing:0.15px">backend-api</div>
<div class="r" style="left:964.2px;top:767px;width:69px;height:28px;background:#2a8ac8;border-radius:4px;"></div>
<div class="t" style="left:964.20px;top:772.90px;width:69px;text-align:center;font-size:14.5px;line-height:18.85px;color:#fff;font-weight:bold;transform:scaleX(0.8821);transform-origin:50% 0;">Running</div>
<div class="r" style="left:1053.3px;top:774.25px;width:13.5px;height:13.5px;background:#2a8ac8;border-radius:7px;"></div>
<div class="t" style="left:1074.00px;top:771.51px;font-size:16px;line-height:20.8px;color:#9b9ea2;font-weight:normal;letter-spacing:0.1px">05:17 ..</div>
<svg class="r" style="left:1255px;top:772px;" width="17" height="18" viewBox="0 0 17 18"><path d="M1.8 4.3c0-.7.5-1.2 1.2-1.2h11.5c.7 0 1.2.5 1.2 1.2V6H1.8z" fill="#b0b2b5"/><rect x="2.45" y="3.75" width="12.6" height="12.6" rx="1.2" fill="none" stroke="#b0b2b5" stroke-width="1.3"/><path d="M5.5 1.2v3M11.7 1.2v3" stroke="#b0b2b5" stroke-width="1.7" stroke-linecap="round"/></svg>
<div class="t" style="left:1280.50px;top:771.31px;font-size:16.5px;line-height:21.45px;color:#2d2f31;font-weight:normal;transform:scaleX(0.93);transform-origin:0 0;">5 minutes ago</div>
<svg class="r" style="left:1445px;top:774px;" width="16" height="14" viewBox="0 0 16 14"><path d="M1.5 1.75h12.6M1.5 6.5h12.6M1.5 11.2h12.6" stroke="#8f9194" stroke-width="1.55" stroke-linecap="round"/></svg>
<div class="r" style="left:88px;top:817px;width:16px;height:16.3px;background:#fff;border-radius:3.5px;border:1px solid #d6d7d9"></div>
<div class="r" style="left:120px;top:809px;width:34px;height:34px;background:#e1e2e4;border-radius:5px;"></div>
<svg class="r" style="left:129px;top:818px;" width="16" height="16" viewBox="0 0 16 16"><g transform="translate(8,8)"><rect x="-1.95" y="-7.7" width="3.9" height="3.8" rx=".4" fill="#808285" transform="rotate(0)"/><rect x="-1.95" y="-7.7" width="3.9" height="3.8" rx=".4" fill="#808285" transform="rotate(60)"/><rect x="-1.95" y="-7.7" width="3.9" height="3.8" rx=".4" fill="#808285" transform="rotate(120)"/><rect x="-1.95" y="-7.7" width="3.9" height="3.8" rx=".4" fill="#808285" transform="rotate(180)"/><rect x="-1.95" y="-7.7" width="3.9" height="3.8" rx=".4" fill="#808285" transform="rotate(240)"/><rect x="-1.95" y="-7.7" width="3.9" height="3.8" rx=".4" fill="#808285" transform="rotate(300)"/><circle r="5.5" fill="#808285"/><circle r="2.4" fill="#e1e2e4"/></g></svg>
<div class="r" style="left:167px;top:818.5px;width:208px;height:15px;background:#e1e2e4;border-radius:0px;"></div>
<svg class="r" style="left:514px;top:818px;" width="21" height="17" viewBox="0 0 21 17"><rect x="2.9" y="0.5" width="15" height="11.2" rx="1.6" fill="none" stroke="#b3b5b8" stroke-width="1.3"/><path d="M0.7 11.7H19.8V12.6C19.8 14.3 18.7 15.5 17.1 15.5H3.4C1.8 15.5 0.7 14.3 0.7 12.6Z" fill="#fff" stroke="#b3b5b8" stroke-width="1.3" stroke-linejoin="round"/><path d="M8.6 12.3h3.4" stroke="#b3b5b8" stroke-width="1.1"/><path d="M7.9 4.4L6.5 6.2l1.4 1.8M12.5 4.4l1.4 1.8-1.4 1.8" fill="none" stroke="#b3b5b8" stroke-width="1.4" stroke-linecap="round" stroke-linejoin="round"/></svg>
<div class="t" style="left:541.00px;top:816.51px;font-size:16px;line-height:20.8px;color:#3a7dc9;font-weight:normal;letter-spacing:0.15px">frontend-selenium</div>
<div class="r" style="left:707px;top:812px;width:51px;height:27.5px;background:#eeeff1;border-radius:4px;"></div>
<svg class="r" style="left:716px;top:819px;" width="15" height="15" viewBox="0 0 15 15"><path d="M1.4 1.4H7.4L13.8 7.8 7.6 13.8 1.4 7.5Z" fill="none" stroke="#a9abae" stroke-width="1.3" stroke-linejoin="round"/><circle cx="4.9" cy="4.9" r="1" fill="#a9abae"/></svg>
<div class="t" style="left:737.00px;top:816.51px;font-size:16px;line-height:20.8px;color:#55595d;font-weight:normal;letter-spacing:0.2px">ui</div>
<div class="r" style="left:964.2px;top:812px;width:69px;height:28px;background:#2a8ac8;border-radius:4px;"></div>
<div class="t" style="left:964.20px;top:817.90px;width:69px;text-align:center;font-size:14.5px;line-height:18.85px;color:#fff;font-weight:bold;transform:scaleX(0.8821);transform-origin:50% 0;">Running</div>
<div class="r" style="left:1053.3px;top:819.25px;width:13.5px;height:13.5px;background:#2a8ac8;border-radius:7px;"></div>
<div class="t" style="left:1074.00px;top:816.51px;font-size:16px;line-height:20.8px;color:#9b9ea2;font-weight:normal;letter-spacing:0.1px">08:43 ..</div>
<svg class="r" style="left:1255px;top:817px;" width="17" height="18" viewBox="0 0 17 18"><path d="M1.8 4.3c0-.7.5-1.2 1.2-1.2h11.5c.7 0 1.2.5 1.2 1.2V6H1.8z" fill="#b0b2b5"/><rect x="2.45" y="3.75" width="12.6" height="12.6" rx="1.2" fill="none" stroke="#b0b2b5" stroke-width="1.3"/><path d="M5.5 1.2v3M11.7 1.2v3" stroke="#b0b2b5" stroke-width="1.7" stroke-linecap="round"/></svg>
<div class="t" style="left:1280.50px;top:816.31px;font-size:16.5px;line-height:21.45px;color:#2d2f31;font-weight:normal;transform:scaleX(0.93);transform-origin:0 0;">9 minutes ago</div>
<svg class="r" style="left:1445px;top:819px;" width="16" height="14" viewBox="0 0 16 14"><path d="M1.5 1.75h12.6M1.5 6.5h12.6M1.5 11.2h12.6" stroke="#8f9194" stroke-width="1.55" stroke-linecap="round"/></svg>
<div class="r" style="left:88px;top:862px;width:16px;height:16.3px;background:#fff;border-radius:3.5px;border:1px solid #d6d7d9"></div>
<div class="r" style="left:120px;top:854px;width:34px;height:34px;background:#e1e2e4;border-radius:5px;"></div>
<svg class="r" style="left:129px;top:863px;" width="16" height="16" viewBox="0 0 16 16"><g transform="translate(8,8)"><rect x="-1.95" y="-7.7" width="3.9" height="3.8" rx=".4" fill="#808285" transform="rotate(0)"/><rect x="-1.95" y="-7.7" width="3.9" height="3.8" rx=".4" fill="#808285" transform="rotate(60)"/><rect x="-1.95" y="-7.7" width="3.9" height="3.8" rx=".4" fill="#808285" transform="rotate(120)"/><rect x="-1.95" y="-7.7" width="3.9" height="3.8" rx=".4" fill="#808285" transform="rotate(180)"/><rect x="-1.95" y="-7.7" width="3.9" height="3.8" rx=".4" fill="#808285" transform="rotate(240)"/><rect x="-1.95" y="-7.7" width="3.9" height="3.8" rx=".4" fill="#808285" transform="rotate(300)"/><circle r="5.5" fill="#808285"/><circle r="2.4" fill="#e1e2e4"/></g></svg>
<div class="r" style="left:167px;top:863.5px;width:168.4px;height:15px;background:#e1e2e4;border-radius:0px;"></div>
<svg class="r" style="left:514px;top:863px;" width="21" height="17" viewBox="0 0 21 17"><rect x="2.9" y="0.5" width="15" height="11.2" rx="1.6" fill="none" stroke="#b3b5b8" stroke-width="1.3"/><path d="M0.7 11.7H19.8V12.6C19.8 14.3 18.7 15.5 17.1 15.5H3.4C1.8 15.5 0.7 14.3 0.7 12.6Z" fill="#fff" stroke="#b3b5b8" stroke-width="1.3" stroke-linejoin="round"/><path d="M8.6 12.3h3.4" stroke="#b3b5b8" stroke-width="1.1"/><path d="M7.9 4.4L6.5 6.2l1.4 1.8M12.5 4.4l1.4 1.8-1.4 1.8" fill="none" stroke="#b3b5b8" stroke-width="1.4" stroke-linecap="round" stroke-linejoin="round"/></svg>
<div class="t" style="left:541.00px;top:861.51px;font-size:16px;line-height:20.8px;color:#3a7dc9;font-weight:normal;letter-spacing:0.15px">app-ios</div>
<div class="r" style="left:707px;top:857px;width:90px;height:27.5px;background:#eeeff1;border-radius:4px;"></div>
<svg class="r" style="left:716px;top:864px;" width="15" height="15" viewBox="0 0 15 15"><path d="M1.4 1.4H7.4L13.8 7.8 7.6 13.8 1.4 7.5Z" fill="none" stroke="#a9abae" stroke-width="1.3" stroke-linejoin="round"/><circle cx="4.9" cy="4.9" r="1" fill="#a9abae"/></svg>
<div class="t" style="left:737.00px;top:861.51px;font-size:16px;line-height:20.8px;color:#55595d;font-weight:normal;letter-spacing:0.2px">feature</div>
<div class="r" style="left:804px;top:857px;width:78px;height:27.5px;background:#eeeff1;border-radius:4px;"></div>
<svg class="r" style="left:813px;top:864px;" width="15" height="15" viewBox="0 0 15 15"><path d="M1.4 1.4H7.4L13.8 7.8 7.6 13.8 1.4 7.5Z" fill="none" stroke="#a9abae" stroke-width="1.3" stroke-linejoin="round"/><circle cx="4.9" cy="4.9" r="1" fill="#a9abae"/></svg>
<div class="t" style="left:834.00px;top:861.51px;font-size:16px;line-height:20.8px;color:#55595d;font-weight:normal;letter-spacing:0.2px">latest</div>
<div class="r" style="left:964.2px;top:857px;width:65px;height:28px;background:#38a853;border-radius:4px;"></div>
<div class="t" style="left:964.20px;top:862.90px;width:65px;text-align:center;font-size:14.5px;line-height:18.85px;color:#fff;font-weight:bold;transform:scaleX(0.8165);transform-origin:50% 0;">Success</div>
<svg class="r" style="left:1050px;top:862px;" width="17" height="17" viewBox="0 0 17 17"><circle cx="8.4" cy="8.4" r="6.85" fill="none" stroke="#a3a6aa" stroke-width="1.4"/><path d="M8.4 4.6v4.3l2.7 2.2" fill="none" stroke="#a3a6aa" stroke-width="1.4" stroke-linecap="round" stroke-linejoin="round"/></svg>
<div class="t" style="left:1074.00px;top:861.51px;font-size:16px;line-height:20.8px;color:#9b9ea2;font-weight:normal;letter-spacing:0.1px">58:35</div>
<svg class="r" style="left:1255px;top:862px;" width="17" height="18" viewBox="0 0 17 18"><path d="M1.8 4.3c0-.7.5-1.2 1.2-1.2h11.5c.7 0 1.2.5 1.2 1.2V6H1.8z" fill="#b0b2b5"/><rect x="2.45" y="3.75" width="12.6" height="12.6" rx="1.2" fill="none" stroke="#b0b2b5" stroke-width="1.3"/><path d="M5.5 1.2v3M11.7 1.2v3" stroke="#b0b2b5" stroke-width="1.7" stroke-linecap="round"/></svg>
<div class="t" style="left:1280.50px;top:861.31px;font-size:16.5px;line-height:21.45px;color:#2d2f31;font-weight:normal;transform:scaleX(0.93);transform-origin:0 0;">50 minutes ago</div>
<svg class="r" style="left:1445px;top:864px;" width="16" height="14" viewBox="0 0 16 14"><path d="M1.5 1.75h12.6M1.5 6.5h12.6M1.5 11.2h12.6" stroke="#8f9194" stroke-width="1.55" stroke-linecap="round"/></svg>
<div class="r" style="left:88px;top:907px;width:16px;height:16.3px;background:#fff;border-radius:3.5px;border:1px solid #d6d7d9"></div>
<div class="r" style="left:120px;top:899px;width:34px;height:34px;background:#e1e2e4;border-radius:5px;"></div>
<svg class="r" style="left:129px;top:908px;" width="16" height="16" viewBox="0 0 16 16"><g transform="translate(8,8)"><rect x="-1.95" y="-7.7" width="3.9" height="3.8" rx=".4" fill="#808285" transform="rotate(0)"/><rect x="-1.95" y="-7.7" width="3.9" height="3.8" rx=".4" fill="#808285" transform="rotate(60)"/><rect x="-1.95" y="-7.7" width="3.9" height="3.8" rx=".4" fill="#808285" transform="rotate(120)"/><rect x="-1.95" y="-7.7" width="3.9" height="3.8" rx=".4" fill="#808285" transform="rotate(180)"/><rect x="-1.95" y="-7.7" width="3.9" height="3.8" rx=".4" fill="#808285" transform="rotate(240)"/><rect x="-1.95" y="-7.7" width="3.9" height="3.8" rx=".4" fill="#808285" transform="rotate(300)"/><circle r="5.5" fill="#808285"/><circle r="2.4" fill="#e1e2e4"/></g></svg>
<div class="r" style="left:167px;top:908.5px;width:168.4px;height:15px;background:#e1e2e4;border-radius:0px;"></div>
<svg class="r" style="left:514px;top:908px;" width="21" height="17" viewBox="0 0 21 17"><rect x="2.9" y="0.5" width="15" height="11.2" rx="1.6" fill="none" stroke="#b3b5b8" stroke-width="1.3"/><path d="M0.7 11.7H19.8V12.6C19.8 14.3 18.7 15.5 17.1 15.5H3.4C1.8 15.5 0.7 14.3 0.7 12.6Z" fill="#fff" stroke="#b3b5b8" stroke-width="1.3" stroke-linejoin="round"/><path d="M8.6 12.3h3.4" stroke="#b3b5b8" stroke-width="1.1"/><path d="M7.9 4.4L6.5 6.2l1.4 1.8M12.5 4.4l1.4 1.8-1.4 1.8" fill="none" stroke="#b3b5b8" stroke-width="1.4" stroke-linecap="round" stroke-linejoin="round"/></svg>
<div class="t" style="left:541.00px;top:906.51px;font-size:16px;line-height:20.8px;color:#3a7dc9;font-weight:normal;letter-spacing:0.15px">app-ios</div>
<div class="r" style="left:964.2px;top:902px;width:65px;height:28px;background:#38a853;border-radius:4px;"></div>
<div class="t" style="left:964.20px;top:907.90px;width:65px;text-align:center;font-size:14.5px;line-height:18.85px;color:#fff;font-weight:bold;transform:scaleX(0.8165);transform-origin:50% 0;">Success</div>
<svg class="r" style="left:1050px;top:907px;" width="17" height="17" viewBox="0 0 17 17"><circle cx="8.4" cy="8.4" r="6.85" fill="none" stroke="#a3a6aa" stroke-width="1.4"/><path d="M8.4 4.6v4.3l2.7 2.2" fill="none" stroke="#a3a6aa" stroke-width="1.4" stroke-linecap="round" stroke-linejoin="round"/></svg>
<div class="t" style="left:1074.00px;top:906.51px;font-size:16px;line-height:20.8px;color:#9b9ea2;font-weight:normal;letter-spacing:0.1px">10:55</div>
<svg class="r" style="left:1255px;top:907px;" width="17" height="18" viewBox="0 0 17 18"><path d="M1.8 4.3c0-.7.5-1.2 1.2-1.2h11.5c.7 0 1.2.5 1.2 1.2V6H1.8z" fill="#b0b2b5"/><rect x="2.45" y="3.75" width="12.6" height="12.6" rx="1.2" fill="none" stroke="#b0b2b5" stroke-width="1.3"/><path d="M5.5 1.2v3M11.7 1.2v3" stroke="#b0b2b5" stroke-width="1.7" stroke-linecap="round"/></svg>
<div class="t" style="left:1280.50px;top:906.31px;font-size:16.5px;line-height:21.45px;color:#2d2f31;font-weight:normal;transform:scaleX(0.93);transform-origin:0 0;">1 hour ago</div>
<svg class="r" style="left:1445px;top:909px;" width="16" height="14" viewBox="0 0 16 14"><path d="M1.5 1.75h12.6M1.5 6.5h12.6M1.5 11.2h12.6" stroke="#8f9194" stroke-width="1.55" stroke-linecap="round"/></svg>
<div class="r" style="left:88px;top:952px;width:16px;height:16.3px;background:#fff;border-radius:3.5px;border:1px solid #d6d7d9"></div>
<div class="r" style="left:120px;top:944px;width:34px;height:34px;background:#e1e2e4;border-radius:5px;"></div>
<svg class="r" style="left:129px;top:953px;" width="16" height="16" viewBox="0 0 16 16"><g transform="translate(8,8)"><rect x="-1.95" y="-7.7" width="3.9" height="3.8" rx=".4" fill="#808285" transform="rotate(0)"/><rect x="-1.95" y="-7.7" width="3.9" height="3.8" rx=".4" fill="#808285" transform="rotate(60)"/><rect x="-1.95" y="-7.7" width="3.9" height="3.8" rx=".4" fill="#808285" transform="rotate(120)"/><rect x="-1.95" y="-7.7" width="3.9" height="3.8" rx=".4" fill="#808285" transform="rotate(180)"/><rect x="-1.95" y="-7.7" width="3.9" height="3.8" rx=".4" fill="#808285" transform="rotate(240)"/><rect x="-1.95" y="-7.7" width="3.9" height="3.8" rx=".4" fill="#808285" transform="rotate(300)"/><circle r="5.5" fill="#808285"/><circle r="2.4" fill="#e1e2e4"/></g></svg>
<div class="r" style="left:167px;top:953.5px;width:168.4px;height:15px;background:#e1e2e4;border-radius:0px;"></div>
<svg class="r" style="left:514px;top:953px;" width="21" height="17" viewBox="0 0 21 17"><rect x="2.9" y="0.5" width="15" height="11.2" rx="1.6" fill="none" stroke="#b3b5b8" stroke-width="1.3"/><path d="M0.7 11.7H19.8V12.6C19.8 14.3 18.7 15.5 17.1 15.5H3.4C1.8 15.5 0.7 14.3 0.7 12.6Z" fill="#fff" stroke="#b3b5b8" stroke-width="1.3" stroke-linejoin="round"/><path d="M8.6 12.3h3.4" stroke="#b3b5b8" stroke-width="1.1"/><path d="M7.9 4.4L6.5 6.2l1.4 1.8M12.5 4.4l1.4 1.8-1.4 1.8" fill="none" stroke="#b3b5b8" stroke-width="1.4" stroke-linecap="round" stroke-linejoin="round"/></svg>
<div class="t" style="left:541.00px;top:951.51px;font-size:16px;line-height:20.8px;color:#3a7dc9;font-weight:normal;letter-spacing:0.15px">app-android</div>
<div class="r" style="left:964.2px;top:947px;width:61px;height:28px;background:#f15025;border-radius:4px;"></div>
<div class="t" style="left:964.20px;top:952.90px;width:61px;text-align:center;font-size:14.5px;line-height:18.85px;color:#fff;font-weight:bold;transform:scaleX(0.9120);transform-origin:50% 0;">Failure</div>
<svg class="r" style="left:1050px;top:952px;" width="17" height="17" viewBox="0 0 17 17"><circle cx="8.4" cy="8.4" r="6.85" fill="none" stroke="#a3a6aa" stroke-width="1.4"/><path d="M8.4 4.6v4.3l2.7 2.2" fill="none" stroke="#a3a6aa" stroke-width="1.4" stroke-linecap="round" stroke-linejoin="round"/></svg>
<div class="t" style="left:1074.00px;top:951.51px;font-size:16px;line-height:20.8px;color:#9b9ea2;font-weight:normal;letter-spacing:0.1px">07:25</div>
<svg class="r" style="left:1178px;top:954px;" width="15" height="15" viewBox="0 0 15 15"><circle cx="7.3" cy="7.2" r="6.8" fill="#c23a20"/><path d="M4.9 4.8l4.8 4.8M9.7 4.8L4.9 9.6" stroke="#fff" stroke-width="1.8" stroke-linecap="round"/></svg>
<div class="t" style="left:1197.00px;top:953.00px;font-size:14px;line-height:18.2px;color:#c23a20;font-weight:normal;">5</div>
<svg class="r" style="left:1255px;top:952px;" width="17" height="18" viewBox="0 0 17 18"><path d="M1.8 4.3c0-.7.5-1.2 1.2-1.2h11.5c.7 0 1.2.5 1.2 1.2V6H1.8z" fill="#b0b2b5"/><rect x="2.45" y="3.75" width="12.6" height="12.6" rx="1.2" fill="none" stroke="#b0b2b5" stroke-width="1.3"/><path d="M5.5 1.2v3M11.7 1.2v3" stroke="#b0b2b5" stroke-width="1.7" stroke-linecap="round"/></svg>
<div class="t" style="left:1280.50px;top:951.31px;font-size:16.5px;line-height:21.45px;color:#2d2f31;font-weight:normal;transform:scaleX(0.93);transform-origin:0 0;">2 hours ago</div>
<svg class="r" style="left:1445px;top:954px;" width="16" height="14" viewBox="0 0 16 14"><path d="M1.5 1.75h12.6M1.5 6.5h12.6M1.5 11.2h12.6" stroke="#8f9194" stroke-width="1.55" stroke-linecap="round"/></svg>
<div class="r" style="left:88px;top:997px;width:16px;height:16.3px;background:#fff;border-radius:3.5px;border:1px solid #d6d7d9"></div>
<div class="r" style="left:120px;top:989px;width:34px;height:34px;background:#e1e2e4;border-radius:5px;"></div>
<svg class="r" style="left:129px;top:998px;" width="16" height="16" viewBox="0 0 16 16"><g transform="translate(8,8)"><rect x="-1.95" y="-7.7" width="3.9" height="3.8" rx=".4" fill="#808285" transform="rotate(0)"/><rect x="-1.95" y="-7.7" width="3.9" height="3.8" rx=".4" fill="#808285" transform="rotate(60)"/><rect x="-1.95" y="-7.7" width="3.9" height="3.8" rx=".4" fill="#808285" transform="rotate(120)"/><rect x="-1.95" y="-7.7" width="3.9" height="3.8" rx=".4" fill="#808285" transform="rotate(180)"/><rect x="-1.95" y="-7.7" width="3.9" height="3.8" rx=".4" fill="#808285" transform="rotate(240)"/><rect x="-1.95" y="-7.7" width="3.9" height="3.8" rx=".4" fill="#808285" transform="rotate(300)"/><circle r="5.5" fill="#808285"/><circle r="2.4" fill="#e1e2e4"/></g></svg>
<div class="r" style="left:167px;top:998.5px;width:208px;height:15px;background:#e1e2e4;border-radius:0px;"></div>
<svg class="r" style="left:514px;top:998px;" width="21" height="17" viewBox="0 0 21 17"><rect x="2.9" y="0.5" width="15" height="11.2" rx="1.6" fill="none" stroke="#b3b5b8" stroke-width="1.3"/><path d="M0.7 11.7H19.8V12.6C19.8 14.3 18.7 15.5 17.1 15.5H3.4C1.8 15.5 0.7 14.3 0.7 12.6Z" fill="#fff" stroke="#b3b5b8" stroke-width="1.3" stroke-linejoin="round"/><path d="M8.6 12.3h3.4" stroke="#b3b5b8" stroke-width="1.1"/><path d="M7.9 4.4L6.5 6.2l1.4 1.8M12.5 4.4l1.4 1.8-1.4 1.8" fill="none" stroke="#b3b5b8" stroke-width="1.4" stroke-linecap="round" stroke-linejoin="round"/></svg>
<div class="t" style="left:541.00px;top:996.51px;font-size:16px;line-height:20.8px;color:#3a7dc9;font-weight:normal;letter-spacing:0.15px">frontend-js</div>
<div class="r" style="left:707px;top:992px;width:78px;height:27.5px;background:#eeeff1;border-radius:4px;"></div>
<svg class="r" style="left:716px;top:999px;" width="15" height="15" viewBox="0 0 15 15"><path d="M1.4 1.4H7.4L13.8 7.8 7.6 13.8 1.4 7.5Z" fill="none" stroke="#a9abae" stroke-width="1.3" stroke-linejoin="round"/><circle cx="4.9" cy="4.9" r="1" fill="#a9abae"/></svg>
<div class="t" style="left:737.00px;top:996.51px;font-size:16px;line-height:20.8px;color:#55595d;font-weight:normal;letter-spacing:0.2px">latest</div>
<div class="r" style="left:792px;top:992px;width:51px;height:27.5px;background:#eeeff1;border-radius:4px;"></div>
<svg class="r" style="left:801px;top:999px;" width="15" height="15" viewBox="0 0 15 15"><path d="M1.4 1.4H7.4L13.8 7.8 7.6 13.8 1.4 7.5Z" fill="none" stroke="#a9abae" stroke-width="1.3" stroke-linejoin="round"/><circle cx="4.9" cy="4.9" r="1" fill="#a9abae"/></svg>
<div class="t" style="left:822.00px;top:996.51px;font-size:16px;line-height:20.8px;color:#55595d;font-weight:normal;letter-spacing:0.2px">ui</div>
<div class="r" style="left:964.2px;top:992px;width:65px;height:28px;background:#38a853;border-radius:4px;"></div>
<div class="t" style="left:964.20px;top:997.90px;width:65px;text-align:center;font-size:14.5px;line-height:18.85px;color:#fff;font-weight:bold;transform:scaleX(0.8165);transform-origin:50% 0;">Success</div>
<svg class="r" style="left:1050px;top:997px;" width="17" height="17" viewBox="0 0 17 17"><circle cx="8.4" cy="8.4" r="6.85" fill="none" stroke="#a3a6aa" stroke-width="1.4"/><path d="M8.4 4.6v4.3l2.7 2.2" fill="none" stroke="#a3a6aa" stroke-width="1.4" stroke-linecap="round" stroke-linejoin="round"/></svg>
<div class="t" style="left:1074.00px;top:996.51px;font-size:16px;line-height:20.8px;color:#9b9ea2;font-weight:normal;letter-spacing:0.1px">11:55</div>
<svg class="r" style="left:1255px;top:997px;" width="17" height="18" viewBox="0 0 17 18"><path d="M1.8 4.3c0-.7.5-1.2 1.2-1.2h11.5c.7 0 1.2.5 1.2 1.2V6H1.8z" fill="#b0b2b5"/><rect x="2.45" y="3.75" width="12.6" height="12.6" rx="1.2" fill="none" stroke="#b0b2b5" stroke-width="1.3"/><path d="M5.5 1.2v3M11.7 1.2v3" stroke="#b0b2b5" stroke-width="1.7" stroke-linecap="round"/></svg>
<div class="t" style="left:1280.50px;top:996.31px;font-size:16.5px;line-height:21.45px;color:#2d2f31;font-weight:normal;transform:scaleX(0.93);transform-origin:0 0;">2 hours ago</div>
<svg class="r" style="left:1445px;top:999px;" width="16" height="14" viewBox="0 0 16 14"><path d="M1.5 1.75h12.6M1.5 6.5h12.6M1.5 11.2h12.6" stroke="#8f9194" stroke-width="1.55" stroke-linecap="round"/></svg>
<div class="r" style="left:88px;top:1042px;width:16px;height:16.3px;background:#fff;border-radius:3.5px;border:1px solid #d6d7d9"></div>
<div class="r" style="left:120px;top:1034px;width:34px;height:34px;background:#e1e2e4;border-radius:5px;"></div>
<svg class="r" style="left:129px;top:1043px;" width="16" height="16" viewBox="0 0 16 16"><g transform="translate(8,8)"><rect x="-1.95" y="-7.7" width="3.9" height="3.8" rx=".4" fill="#808285" transform="rotate(0)"/><rect x="-1.95" y="-7.7" width="3.9" height="3.8" rx=".4" fill="#808285" transform="rotate(60)"/><rect x="-1.95" y="-7.7" width="3.9" height="3.8" rx=".4" fill="#808285" transform="rotate(120)"/><rect x="-1.95" y="-7.7" width="3.9" height="3.8" rx=".4" fill="#808285" transform="rotate(180)"/><rect x="-1.95" y="-7.7" width="3.9" height="3.8" rx=".4" fill="#808285" transform="rotate(240)"/><rect x="-1.95" y="-7.7" width="3.9" height="3.8" rx=".4" fill="#808285" transform="rotate(300)"/><circle r="5.5" fill="#808285"/><circle r="2.4" fill="#e1e2e4"/></g></svg>
<div class="r" style="left:167px;top:1043.5px;width:249px;height:15px;background:#e1e2e4;border-radius:0px;"></div>
<svg class="r" style="left:514px;top:1043px;" width="21" height="17" viewBox="0 0 21 17"><rect x="2.9" y="0.5" width="15" height="11.2" rx="1.6" fill="none" stroke="#b3b5b8" stroke-width="1.3"/><path d="M0.7 11.7H19.8V12.6C19.8 14.3 18.7 15.5 17.1 15.5H3.4C1.8 15.5 0.7 14.3 0.7 12.6Z" fill="#fff" stroke="#b3b5b8" stroke-width="1.3" stroke-linejoin="round"/><path d="M8.6 12.3h3.4" stroke="#b3b5b8" stroke-width="1.1"/><path d="M7.9 4.4L6.5 6.2l1.4 1.8M12.5 4.4l1.4 1.8-1.4 1.8" fill="none" stroke="#b3b5b8" stroke-width="1.4" stroke-linecap="round" stroke-linejoin="round"/></svg>
<div class="t" style="left:541.00px;top:1041.51px;font-size:16px;line-height:20.8px;color:#3a7dc9;font-weight:normal;letter-spacing:0.15px">backend-api</div>
<div class="r" style="left:707px;top:1037px;width:89px;height:27.5px;background:#eeeff1;border-radius:4px;"></div>
<svg class="r" style="left:716px;top:1044px;" width="15" height="15" viewBox="0 0 15 15"><path d="M1.4 1.4H7.4L13.8 7.8 7.6 13.8 1.4 7.5Z" fill="none" stroke="#a9abae" stroke-width="1.3" stroke-linejoin="round"/><circle cx="4.9" cy="4.9" r="1" fill="#a9abae"/></svg>
<div class="t" style="left:737.00px;top:1041.51px;font-size:16px;line-height:20.8px;color:#55595d;font-weight:normal;letter-spacing:0.2px">release</div>
<div class="r" style="left:964.2px;top:1037px;width:65px;height:28px;background:#38a853;border-radius:4px;"></div>
<div class="t" style="left:964.20px;top:1042.90px;width:65px;text-align:center;font-size:14.5px;line-height:18.85px;color:#fff;font-weight:bold;transform:scaleX(0.8165);transform-origin:50% 0;">Success</div>
<svg class="r" style="left:1050px;top:1042px;" width="17" height="17" viewBox="0 0 17 17"><circle cx="8.4" cy="8.4" r="6.85" fill="none" stroke="#a3a6aa" stroke-width="1.4"/><path d="M8.4 4.6v4.3l2.7 2.2" fill="none" stroke="#a3a6aa" stroke-width="1.4" stroke-linecap="round" stroke-linejoin="round"/></svg>
<div class="t" style="left:1074.00px;top:1041.51px;font-size:16px;line-height:20.8px;color:#9b9ea2;font-weight:normal;letter-spacing:0.1px">35:15</div>
<svg class="r" style="left:1255px;top:1042px;" width="17" height="18" viewBox="0 0 17 18"><path d="M1.8 4.3c0-.7.5-1.2 1.2-1.2h11.5c.7 0 1.2.5 1.2 1.2V6H1.8z" fill="#b0b2b5"/><rect x="2.45" y="3.75" width="12.6" height="12.6" rx="1.2" fill="none" stroke="#b0b2b5" stroke-width="1.3"/><path d="M5.5 1.2v3M11.7 1.2v3" stroke="#b0b2b5" stroke-width="1.7" stroke-linecap="round"/></svg>
<div class="t" style="left:1280.50px;top:1041.31px;font-size:16.5px;line-height:21.45px;color:#2d2f31;font-weight:normal;transform:scaleX(0.93);transform-origin:0 0;">2 hours ago</div>
<svg class="r" style="left:1445px;top:1044px;" width="16" height="14" viewBox="0 0 16 14"><path d="M1.5 1.75h12.6M1.5 6.5h12.6M1.5 11.2h12.6" stroke="#8f9194" stroke-width="1.55" stroke-linecap="round"/></svg>
<div class="r" style="left:88px;top:1087px;width:16px;height:16.3px;background:#fff;border-radius:3.5px;border:1px solid #d6d7d9"></div>
<div class="r" style="left:120px;top:1079px;width:34px;height:34px;background:#e1e2e4;border-radius:5px;"></div>
<svg class="r" style="left:129px;top:1088px;" width="16" height="16" viewBox="0 0 16 16"><g transform="translate(8,8)"><rect x="-1.95" y="-7.7" width="3.9" height="3.8" rx=".4" fill="#808285" transform="rotate(0)"/><rect x="-1.95" y="-7.7" width="3.9" height="3.8" rx=".4" fill="#808285" transform="rotate(60)"/><rect x="-1.95" y="-7.7" width="3.9" height="3.8" rx=".4" fill="#808285" transform="rotate(120)"/><rect x="-1.95" y="-7.7" width="3.9" height="3.8" rx=".4" fill="#808285" transform="rotate(180)"/><rect x="-1.95" y="-7.7" width="3.9" height="3.8" rx=".4" fill="#808285" transform="rotate(240)"/><rect x="-1.95" y="-7.7" width="3.9" height="3.8" rx=".4" fill="#808285" transform="rotate(300)"/><circle r="5.5" fill="#808285"/><circle r="2.4" fill="#e1e2e4"/></g></svg>
<div class="r" style="left:167px;top:1088.5px;width:190px;height:15px;background:#e1e2e4;border-radius:0px;"></div>
<svg class="r" style="left:514px;top:1088px;" width="21" height="17" viewBox="0 0 21 17"><rect x="2.9" y="0.5" width="15" height="11.2" rx="1.6" fill="none" stroke="#b3b5b8" stroke-width="1.3"/><path d="M0.7 11.7H19.8V12.6C19.8 14.3 18.7 15.5 17.1 15.5H3.4C1.8 15.5 0.7 14.3 0.7 12.6Z" fill="#fff" stroke="#b3b5b8" stroke-width="1.3" stroke-linejoin="round"/><path d="M8.6 12.3h3.4" stroke="#b3b5b8" stroke-width="1.1"/><path d="M7.9 4.4L6.5 6.2l1.4 1.8M12.5 4.4l1.4 1.8-1.4 1.8" fill="none" stroke="#b3b5b8" stroke-width="1.4" stroke-linecap="round" stroke-linejoin="round"/></svg>
<div class="t" style="left:541.00px;top:1086.51px;font-size:16px;line-height:20.8px;color:#3a7dc9;font-weight:normal;letter-spacing:0.15px">backend-api</div>
<div class="r" style="left:964.2px;top:1082px;width:65px;height:28px;background:#38a853;border-radius:4px;"></div>
<div class="t" style="left:964.20px;top:1087.90px;width:65px;text-align:center;font-size:14.5px;line-height:18.85px;color:#fff;font-weight:bold;transform:scaleX(0.8165);transform-origin:50% 0;">Success</div>
<svg class="r" style="left:1050px;top:1087px;" width="17" height="17" viewBox="0 0 17 17"><circle cx="8.4" cy="8.4" r="6.85" fill="none" stroke="#a3a6aa" stroke-width="1.4"/><path d="M8.4 4.6v4.3l2.7 2.2" fill="none" stroke="#a3a6aa" stroke-width="1.4" stroke-linecap="round" stroke-linejoin="round"/></svg>
<div class="t" style="left:1074.00px;top:1086.51px;font-size:16px;line-height:20.8px;color:#9b9ea2;font-weight:normal;letter-spacing:0.1px">52:28</div>
<svg class="r" style="left:1255px;top:1087px;" width="17" height="18" viewBox="0 0 17 18"><path d="M1.8 4.3c0-.7.5-1.2 1.2-1.2h11.5c.7 0 1.2.5 1.2 1.2V6H1.8z" fill="#b0b2b5"/><rect x="2.45" y="3.75" width="12.6" height="12.6" rx="1.2" fill="none" stroke="#b0b2b5" stroke-width="1.3"/><path d="M5.5 1.2v3M11.7 1.2v3" stroke="#b0b2b5" stroke-width="1.7" stroke-linecap="round"/></svg>
<div class="t" style="left:1280.50px;top:1086.31px;font-size:16.5px;line-height:21.45px;color:#2d2f31;font-weight:normal;transform:scaleX(0.93);transform-origin:0 0;">3 hours ago</div>
<svg class="r" style="left:1445px;top:1089px;" width="16" height="14" viewBox="0 0 16 14"><path d="M1.5 1.75h12.6M1.5 6.5h12.6M1.5 11.2h12.6" stroke="#8f9194" stroke-width="1.55" stroke-linecap="round"/></svg>
<div class="r" style="left:88px;top:1132px;width:16px;height:16.3px;background:#fff;border-radius:3.5px;border:1px solid #d6d7d9"></div>
<div class="r" style="left:120px;top:1124px;width:34px;height:34px;background:#e1e2e4;border-radius:5px;"></div>
<svg class="r" style="left:129px;top:1133px;" width="16" height="16" viewBox="0 0 16 16"><g transform="translate(8,8)"><rect x="-1.95" y="-7.7" width="3.9" height="3.8" rx=".4" fill="#808285" transform="rotate(0)"/><rect x="-1.95" y="-7.7" width="3.9" height="3.8" rx=".4" fill="#808285" transform="rotate(60)"/><rect x="-1.95" y="-7.7" width="3.9" height="3.8" rx=".4" fill="#808285" transform="rotate(120)"/><rect x="-1.95" y="-7.7" width="3.9" height="3.8" rx=".4" fill="#808285" transform="rotate(180)"/><rect x="-1.95" y="-7.7" width="3.9" height="3.8" rx=".4" fill="#808285" transform="rotate(240)"/><rect x="-1.95" y="-7.7" width="3.9" height="3.8" rx=".4" fill="#808285" transform="rotate(300)"/><circle r="5.5" fill="#808285"/><circle r="2.4" fill="#e1e2e4"/></g></svg>
<div class="r" style="left:167px;top:1133.5px;width:249px;height:15px;background:#e1e2e4;border-radius:0px;"></div>
<svg class="r" style="left:514px;top:1133px;" width="21" height="17" viewBox="0 0 21 17"><rect x="2.9" y="0.5" width="15" height="11.2" rx="1.6" fill="none" stroke="#b3b5b8" stroke-width="1.3"/><path d="M0.7 11.7H19.8V12.6C19.8 14.3 18.7 15.5 17.1 15.5H3.4C1.8 15.5 0.7 14.3 0.7 12.6Z" fill="#fff" stroke="#b3b5b8" stroke-width="1.3" stroke-linejoin="round"/><path d="M8.6 12.3h3.4" stroke="#b3b5b8" stroke-width="1.1"/><path d="M7.9 4.4L6.5 6.2l1.4 1.8M12.5 4.4l1.4 1.8-1.4 1.8" fill="none" stroke="#b3b5b8" stroke-width="1.4" stroke-linecap="round" stroke-linejoin="round"/></svg>
<div class="t" style="left:541.00px;top:1131.51px;font-size:16px;line-height:20.8px;color:#3a7dc9;font-weight:normal;letter-spacing:0.15px">backend-api</div>
<div class="r" style="left:964.2px;top:1127px;width:65px;height:28px;background:#38a853;border-radius:4px;"></div>
<div class="t" style="left:964.20px;top:1132.90px;width:65px;text-align:center;font-size:14.5px;line-height:18.85px;color:#fff;font-weight:bold;transform:scaleX(0.8165);transform-origin:50% 0;">Success</div>
<svg class="r" style="left:1050px;top:1132px;" width="17" height="17" viewBox="0 0 17 17"><circle cx="8.4" cy="8.4" r="6.85" fill="none" stroke="#a3a6aa" stroke-width="1.4"/><path d="M8.4 4.6v4.3l2.7 2.2" fill="none" stroke="#a3a6aa" stroke-width="1.4" stroke-linecap="round" stroke-linejoin="round"/></svg>
<div class="t" style="left:1074.00px;top:1131.51px;font-size:16px;line-height:20.8px;color:#9b9ea2;font-weight:normal;letter-spacing:0.1px">15:12</div>
<svg class="r" style="left:1255px;top:1132px;" width="17" height="18" viewBox="0 0 17 18"><path d="M1.8 4.3c0-.7.5-1.2 1.2-1.2h11.5c.7 0 1.2.5 1.2 1.2V6H1.8z" fill="#b0b2b5"/><rect x="2.45" y="3.75" width="12.6" height="12.6" rx="1.2" fill="none" stroke="#b0b2b5" stroke-width="1.3"/><path d="M5.5 1.2v3M11.7 1.2v3" stroke="#b0b2b5" stroke-width="1.7" stroke-linecap="round"/></svg>
<div class="t" style="left:1280.50px;top:1131.31px;font-size:16.5px;line-height:21.45px;color:#2d2f31;font-weight:normal;transform:scaleX(0.93);transform-origin:0 0;">3 hours ago</div>
<svg class="r" style="left:1445px;top:1134px;" width="16" height="14" viewBox="0 0 16 14"><path d="M1.5 1.75h12.6M1.5 6.5h12.6M1.5 11.2h12.6" stroke="#8f9194" stroke-width="1.55" stroke-linecap="round"/></svg>
<div class="r" style="left:88px;top:1177px;width:16px;height:16.3px;background:#fff;border-radius:3.5px;border:1px solid #d6d7d9"></div>
<div class="r" style="left:120px;top:1169px;width:34px;height:34px;background:#e1e2e4;border-radius:5px;"></div>
<svg class="r" style="left:129px;top:1178px;" width="16" height="16" viewBox="0 0 16 16"><g transform="translate(8,8)"><rect x="-1.95" y="-7.7" width="3.9" height="3.8" rx=".4" fill="#808285" transform="rotate(0)"/><rect x="-1.95" y="-7.7" width="3.9" height="3.8" rx=".4" fill="#808285" transform="rotate(60)"/><rect x="-1.95" y="-7.7" width="3.9" height="3.8" rx=".4" fill="#808285" transform="rotate(120)"/><rect x="-1.95" y="-7.7" width="3.9" height="3.8" rx=".4" fill="#808285" transform="rotate(180)"/><rect x="-1.95" y="-7.7" width="3.9" height="3.8" rx=".4" fill="#808285" transform="rotate(240)"/><rect x="-1.95" y="-7.7" width="3.9" height="3.8" rx=".4" fill="#808285" transform="rotate(300)"/><circle r="5.5" fill="#808285"/><circle r="2.4" fill="#e1e2e4"/></g></svg>
<div class="r" style="left:167px;top:1178.5px;width:168.4px;height:15px;background:#e1e2e4;border-radius:0px;"></div>
<svg class="r" style="left:514px;top:1178px;" width="21" height="17" viewBox="0 0 21 17"><rect x="2.9" y="0.5" width="15" height="11.2" rx="1.6" fill="none" stroke="#b3b5b8" stroke-width="1.3"/><path d="M0.7 11.7H19.8V12.6C19.8 14.3 18.7 15.5 17.1 15.5H3.4C1.8 15.5 0.7 14.3 0.7 12.6Z" fill="#fff" stroke="#b3b5b8" stroke-width="1.3" stroke-linejoin="round"/><path d="M8.6 12.3h3.4" stroke="#b3b5b8" stroke-width="1.1"/><path d="M7.9 4.4L6.5 6.2l1.4 1.8M12.5 4.4l1.4 1.8-1.4 1.8" fill="none" stroke="#b3b5b8" stroke-width="1.4" stroke-linecap="round" stroke-linejoin="round"/></svg>
<div class="t" style="left:541.00px;top:1176.51px;font-size:16px;line-height:20.8px;color:#3a7dc9;font-weight:normal;letter-spacing:0.15px">app-ios</div>
<div class="r" style="left:707px;top:1172px;width:78px;height:27.5px;background:#eeeff1;border-radius:4px;"></div>
<svg class="r" style="left:716px;top:1179px;" width="15" height="15" viewBox="0 0 15 15"><path d="M1.4 1.4H7.4L13.8 7.8 7.6 13.8 1.4 7.5Z" fill="none" stroke="#a9abae" stroke-width="1.3" stroke-linejoin="round"/><circle cx="4.9" cy="4.9" r="1" fill="#a9abae"/></svg>
<div class="t" style="left:737.00px;top:1176.51px;font-size:16px;line-height:20.8px;color:#55595d;font-weight:normal;letter-spacing:0.2px">latest</div>
<div class="r" style="left:964.2px;top:1172px;width:65px;height:28px;background:#38a853;border-radius:4px;"></div>
<div class="t" style="left:964.20px;top:1177.90px;width:65px;text-align:center;font-size:14.5px;line-height:18.85px;color:#fff;font-weight:bold;transform:scaleX(0.8165);transform-origin:50% 0;">Success</div>
<svg class="r" style="left:1050px;top:1177px;" width="17" height="17" viewBox="0 0 17 17"><circle cx="8.4" cy="8.4" r="6.85" fill="none" stroke="#a3a6aa" stroke-width="1.4"/><path d="M8.4 4.6v4.3l2.7 2.2" fill="none" stroke="#a3a6aa" stroke-width="1.4" stroke-linecap="round" stroke-linejoin="round"/></svg>
<div class="t" style="left:1074.00px;top:1176.51px;font-size:16px;line-height:20.8px;color:#9b9ea2;font-weight:normal;letter-spacing:0.1px">23:32</div>
<svg class="r" style="left:1255px;top:1177px;" width="17" height="18" viewBox="0 0 17 18"><path d="M1.8 4.3c0-.7.5-1.2 1.2-1.2h11.5c.7 0 1.2.5 1.2 1.2V6H1.8z" fill="#b0b2b5"/><rect x="2.45" y="3.75" width="12.6" height="12.6" rx="1.2" fill="none" stroke="#b0b2b5" stroke-width="1.3"/><path d="M5.5 1.2v3M11.7 1.2v3" stroke="#b0b2b5" stroke-width="1.7" stroke-linecap="round"/></svg>
<div class="t" style="left:1280.50px;top:1176.31px;font-size:16.5px;line-height:21.45px;color:#2d2f31;font-weight:normal;transform:scaleX(0.93);transform-origin:0 0;">4 hours ago</div>
<svg class="r" style="left:1445px;top:1179px;" width="16" height="14" viewBox="0 0 16 14"><path d="M1.5 1.75h12.6M1.5 6.5h12.6M1.5 11.2h12.6" stroke="#8f9194" stroke-width="1.55" stroke-linecap="round"/></svg>
</body></html>
